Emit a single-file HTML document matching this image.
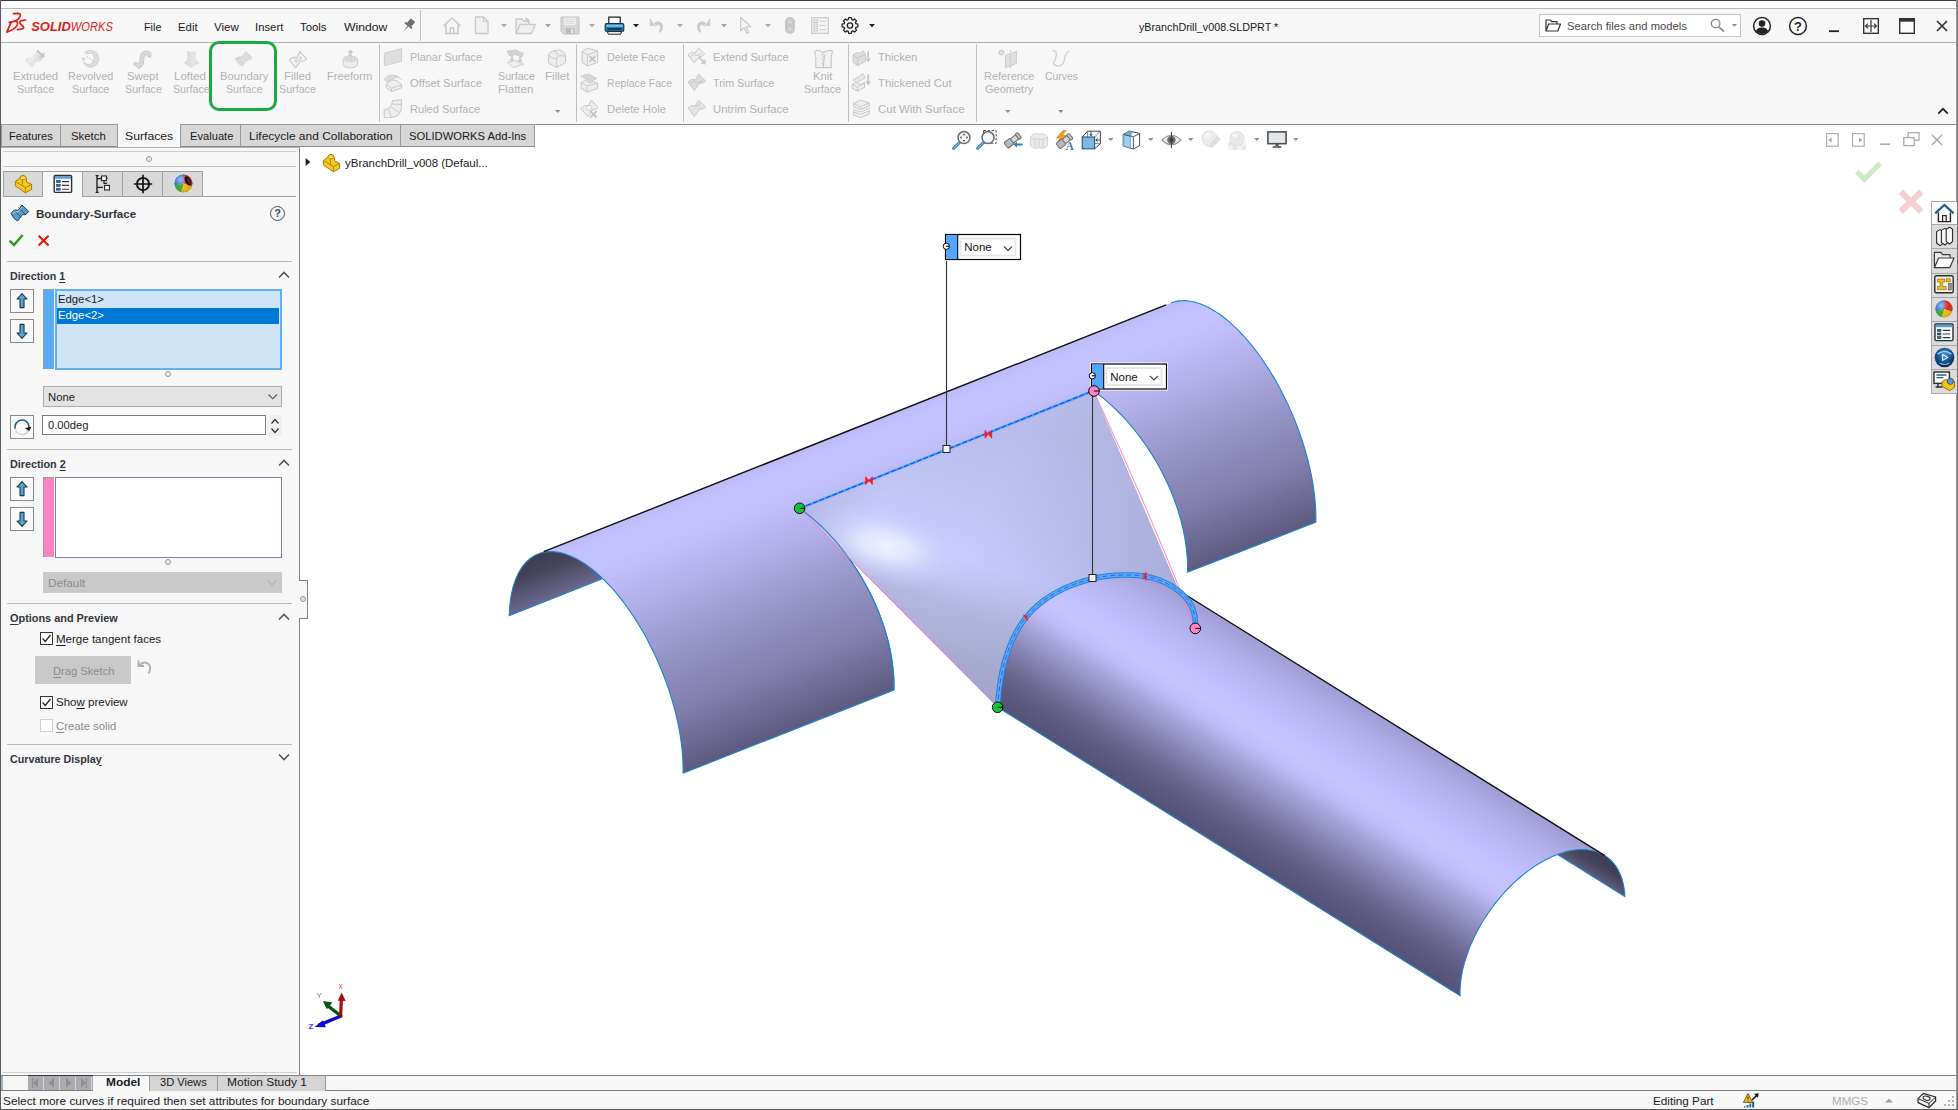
<!DOCTYPE html>
<html lang="en"><head><meta charset="utf-8"><title>yBranchDrill_v008.SLDPRT - SOLIDWORKS</title>
<style>
*{box-sizing:border-box;margin:0;padding:0}
html,body{width:1958px;height:1110px;overflow:hidden;background:#fff}
body{font-family:"Liberation Sans",sans-serif;font-size:12px;color:#1a1a1a;position:relative}
.abs{position:absolute}
.t{position:absolute;white-space:nowrap;line-height:14px;height:14px;transform-origin:0 50%}
.dis{color:#a3a3a3}
.c{text-align:center}
.line{position:absolute;background:#b4b4b4}
.vsep{position:absolute;width:1px;background:#c0c0c0;top:44px;height:78px}
.tab{position:absolute;top:124px;height:22.5px;background:#d7d7d7;border:1px solid #9a9a9a;border-bottom:1px solid #8a8a8a;font-size:12.5px;line-height:21px;text-align:center;white-space:nowrap}
.tab.act{background:#fff;border-color:#9a9a9a;height:24px}
.btab{position:absolute;top:1073px;height:18px;background:#d4d4d4;border:1px solid #9a9a9a;border-top:none;font-size:12.5px;line-height:16px;text-align:center;white-space:nowrap}
.itab{position:absolute;top:171px;height:25px;width:41px;background:#d9d9d9;border:1px solid #a0a0a0;border-bottom:none}
.itab.act{background:#f7f7f7;height:27px;border-color:#a0a0a0}
.hdr{position:absolute;left:10px;font-weight:bold;font-size:12px;letter-spacing:-0.35px;color:#2a2a2a;white-space:nowrap;line-height:14px}
.sepl{position:absolute;left:7px;width:285px;height:1px;background:#b9b9b9}
.sqbtn{position:absolute;left:10px;width:24px;height:24px;border:1px solid #8a8a8a;background:#f9f9f9}
u{text-decoration-thickness:1px;text-underline-offset:1.5px}
.rt{position:absolute;left:1931px;width:26px;height:24px;background:#dadada;border:1px solid #a8a8a8;border-right:none}
</style></head><body>
<!-- window frame -->
<div class="abs" style="left:0;top:0;width:1958px;height:1110px;background:#f7f7f7"></div>
<div class="abs" style="left:0;top:0;width:1958px;height:9px;background:#fff"></div>
<div class="abs" style="left:0;top:0;width:1958px;height:1px;background:#3a3a3a"></div>
<div class="line" style="left:0;top:8px;width:1958px;height:1px;background:#b8b8b8"></div>
<div class="line" style="left:0;top:42px;width:1958px;height:1px;background:#b0b0b0"></div>
<!-- viewport white -->
<div class="abs" style="left:300px;top:125px;width:1657px;height:950px;background:#fff"></div>
<div class="line" style="left:0;top:124px;width:1958px;height:1px;background:#8c8c8c"></div>

<!-- logo -->
<svg class="abs" style="left:4px;top:11px" width="112" height="24" viewBox="0 0 112 24">
 <g fill="none" stroke="#da1f1a" stroke-width="1.7" stroke-linecap="round" stroke-linejoin="round">
  <path d="M9.5 2.6 L14 2.3 Q17.5 2.6 16 5.6 Q14.6 8.3 11.2 10.2"/>
  <path d="M5.2 11.4 L11 10.2 Q14.6 10.3 13.2 14 Q11 18.5 2.8 21.2 L7.2 11.4"/>
  <path d="M21.6 9 L17.4 9.7 Q14.8 10.6 16.4 12.8 L19.2 15.4 Q20.6 17.6 17.6 18.2 L13.4 18.6"/>
 </g>
 <text x="27.2" y="19.7" font-family="Liberation Sans, sans-serif" font-size="13.6" font-weight="bold" font-style="italic" fill="#da1f1a" textLength="39.6" lengthAdjust="spacingAndGlyphs">SOLID</text>
 <text x="66.8" y="19.7" font-family="Liberation Sans, sans-serif" font-size="13.6" font-style="italic" fill="#da1f1a" textLength="42" lengthAdjust="spacingAndGlyphs">WORKS</text>
</svg>

<!-- menu -->
<div class="abs" style="left:420px;top:10px;width:1px;height:31px;background:#c0c0c0"></div>

<!-- search box -->
<div class="abs" style="left:1539px;top:14px;width:202px;height:23px;background:#fff;border:1px solid #c6c6c6"></div>
<div class="vsep" style="left:379px"></div>
<div class="vsep" style="left:576px"></div>
<div class="vsep" style="left:683px"></div>
<div class="vsep" style="left:848px"></div>
<div class="vsep" style="left:976px"></div>
<div class="abs" style="left:209px;top:40.5px;width:68px;height:70.5px;border:3px solid #1aaa3f;border-radius:10px"></div>
<div class="tab" style="left:1px;width:61px"></div>
<div class="tab" style="left:60px;width:58px"></div>
<div class="abs" style="left:118px;top:124px;width:63px;height:23px;background:#f7f7f7"></div>
<div class="tab" style="left:180px;width:62px"></div>
<div class="tab" style="left:240px;width:162px"></div>
<div class="tab" style="left:400px;width:135px"></div>
<!-- left panel -->
<div class="abs" style="left:1px;top:148px;width:298px;height:927px;background:#f7f7f7"></div>
<div class="abs" style="left:299px;top:148px;width:1px;height:927px;background:#808080"></div>
<div class="abs" style="left:1px;top:147px;width:299px;height:1px;background:#9fb3c4"></div>
<div class="abs" style="left:3px;top:151px;width:293px;height:1px;background:#cfcfcf"></div>
<div class="abs" style="left:146px;top:156px;width:6px;height:6px;border:1px solid #9a9a9a;border-radius:50%;background:#e8e8e8"></div>
<div class="abs" style="left:3px;top:166px;width:293px;height:1px;background:#c4c4c4"></div>
<div class="itab" style="left:3px;width:40px"></div>
<div class="itab" style="left:82px;width:41px"></div>
<div class="itab" style="left:122px;width:41px"></div>
<div class="itab" style="left:162px;width:41px"></div>
<div class="abs" style="left:42px;top:171px;width:41px;height:26px;border:1px solid #a0a0a0;border-bottom:none;background:#f7f7f7"></div>
<div class="abs" style="left:3px;top:196px;width:40px;height:1px;background:#a0a0a0"></div>
<div class="abs" style="left:82px;top:196px;width:214px;height:1px;background:#a0a0a0"></div>

<div class="abs" style="left:270px;top:206px;width:15px;height:15px;border:1.3px solid #35506a;border-radius:50%;font-size:11px;font-weight:bold;line-height:12.5px;text-align:center;color:#35506a">?</div>
<svg class="abs" style="left:8px;top:233px" width="44" height="15" viewBox="0 0 44 15"><path d="M1.6 7.6 L6 12 L14.6 2" fill="none" stroke="#2e9a14" stroke-width="2.4"/><path d="M30.6 2.8 L40.6 12.6 M40.6 2.8 L30.6 12.6" fill="none" stroke="#e01a08" stroke-width="2.1"/></svg>

<div class="sepl" style="top:261px"></div>
<svg class="abs" style="left:278px;top:271px" width="12" height="8"><path d="M1 6.5 L6 1.5 L11 6.5" fill="none" stroke="#555" stroke-width="1.6"/></svg>
<div class="sqbtn" style="top:289px"></div>
<div class="sqbtn" style="top:319px"></div>
<div class="abs" style="left:43px;top:289px;width:11px;height:80px;background:#5aaaf8;border-top:1px solid #9a9a9a;border-left:1px solid #9a9a9a"></div>
<div class="abs" style="left:55px;top:289px;width:227px;height:81px;background:#d0e4f8;border:2px solid #62aeee"></div>
<div class="abs" style="left:57px;top:308px;width:222px;height:16px;background:#0078d7"></div>
<div class="abs" style="left:165px;top:371px;width:6px;height:6px;border:1px solid #9a9a9a;border-radius:50%;background:#e8e8e8"></div>
<div class="abs" style="left:43px;top:386px;width:239px;height:21px;background:#e3e3e3;border:1px solid #adadad"></div>
<svg class="abs" style="left:267px;top:393px" width="12" height="8"><path d="M1.5 1.5 L5.8 5.8 L10 1.5" fill="none" stroke="#555" stroke-width="1.1"/></svg>
<div class="sqbtn" style="top:415px;height:24px"></div>
<div class="abs" style="left:42px;top:415px;width:224px;height:20px;background:#fff;border:1px solid #7a7a7a"></div>
<div class="abs" style="left:268px;top:415px;width:14px;height:21px;background:#efefef"></div>
<svg class="abs" style="left:270px;top:417px" width="10" height="18"><path d="M1.5 6.5 L5 2.5 L8.5 6.5 M1.5 11.5 L5 15.5 L8.5 11.5" fill="none" stroke="#333" stroke-width="1.3"/></svg>

<div class="sepl" style="top:449px"></div>
<svg class="abs" style="left:278px;top:459px" width="12" height="8"><path d="M1 6.5 L6 1.5 L11 6.5" fill="none" stroke="#555" stroke-width="1.6"/></svg>
<div class="sqbtn" style="top:477px"></div>
<div class="sqbtn" style="top:507px"></div>
<div class="abs" style="left:43px;top:477px;width:11px;height:80px;background:#ff82c4;border-top:1px solid #9a9a9a;border-left:1px solid #9a9a9a"></div>
<div class="abs" style="left:55px;top:477px;width:227px;height:81px;background:#fff;border:1px solid #7c84a0"></div>
<div class="abs" style="left:165px;top:559px;width:6px;height:6px;border:1px solid #9a9a9a;border-radius:50%;background:#e8e8e8"></div>
<div class="abs" style="left:43px;top:572px;width:239px;height:21px;background:#c9c9c9"></div>
<svg class="abs" style="left:266px;top:579px" width="12" height="8"><path d="M1.5 1.5 L6 6 L10.5 1.5" fill="none" stroke="#b4b4b4" stroke-width="1.2"/></svg>

<div class="sepl" style="top:603px"></div>
<svg class="abs" style="left:278px;top:613px" width="12" height="8"><path d="M1 6.5 L6 1.5 L11 6.5" fill="none" stroke="#555" stroke-width="1.6"/></svg>
<div class="abs" style="left:40px;top:632px;width:13px;height:13px;border:1px solid #333;background:#fff"></div>
<svg class="abs" style="left:40px;top:632px" width="13" height="13"><path d="M2.5 6.5 L5.3 9.5 L10.5 3" fill="none" stroke="#222" stroke-width="1.3"/></svg>
<div class="abs" style="left:35px;top:656px;width:96px;height:28px;background:#c9c9c9"></div>
<svg class="abs" style="left:136px;top:658px" width="18" height="18"><path d="M2.5 2.5 L2.5 8 L8 8 M3 7.5 Q8 2.5 12.5 6 Q16 10 12.5 15.5" fill="none" stroke="#b0b0b0" stroke-width="1.8"/></svg>
<div class="abs" style="left:40px;top:696px;width:13px;height:13px;border:1px solid #333;background:#fff"></div>
<svg class="abs" style="left:40px;top:696px" width="13" height="13"><path d="M2.5 6.5 L5.3 9.5 L10.5 3" fill="none" stroke="#222" stroke-width="1.3"/></svg>
<div class="abs" style="left:40px;top:719px;width:13px;height:13px;border:1px solid #cfcfcf;background:#fff"></div>

<div class="sepl" style="top:744px"></div>
<svg class="abs" style="left:278px;top:753px" width="12" height="8"><path d="M1 1.5 L6 6.5 L11 1.5" fill="none" stroke="#555" stroke-width="1.6"/></svg>

<!-- panel handle -->
<div class="abs" style="left:299px;top:580px;width:9px;height:39px;background:#f7f7f7;border:1px solid #808080;border-left:none"></div>
<div class="abs" style="left:300px;top:596px;width:6px;height:6px;border:1px solid #9a9a9a;border-radius:50%;background:#dcdcdc"></div>

<!-- bottom -->
<div class="abs" style="left:2px;top:1072px;width:295px;height:1px;background:#cfcfcf"></div>
<div class="abs" style="left:0;top:1075px;width:1958px;height:1px;background:#808080"></div>
<div class="abs" style="left:0;top:1076px;width:1958px;height:14px;background:#f6f6f6"></div>
<div class="abs" style="left:0;top:1090px;width:1958px;height:1px;background:#808080"></div>
<div class="abs" style="left:1px;top:1076px;width:2px;height:14px;background:#9db4bd"></div>
<div class="abs" style="left:28px;top:1075px;width:65px;height:15px;background:#a9abb0;border-top:1px solid #333"></div>
<svg class="abs" style="left:28px;top:1076px" width="65" height="14" viewBox="0 0 65 14">
 <g fill="#8e8f93"><path d="M4 2h1.2v10H4z M10 2 L10 12 L5.2 7z"/><path d="M26 2 L26 12 L20.5 7z"/><path d="M38 2 L43.5 7 L38 12z"/><path d="M53 2 L57.8 7 L53 12z M57.8 2h1.2v10h-1.2z"/></g>
 <g fill="#d8d8dc"><rect x="15" y="1" width="1" height="13"/><rect x="31" y="1" width="1" height="13"/><rect x="47" y="1" width="1" height="13"/><rect x="63" y="1" width="1" height="13"/></g>
</svg>
<div class="btab" style="left:93px;width:57px;background:#f7f7f7;font-weight:bold;border-left:none;letter-spacing:-0.3px;top:1076px;height:15px;line-height:12px;border-bottom:none"></div>
<div class="btab" style="left:149px;width:69px;top:1076px;height:15px;line-height:12px;border-bottom:none"></div>
<div class="btab" style="left:217px;width:109px;top:1076px;height:15px;line-height:12px;border-bottom:none"></div>
<svg class="abs" style="left:1885px;top:1098px" width="8" height="5"><path d="M0 4.5 L4 0.5 L8 4.5z" fill="#a0a0a0"/></svg>
<!-- frame borders -->
<div class="abs" style="left:0;top:0;width:1px;height:1110px;background:#5c5c5c"></div>
<div class="abs" style="left:1956px;top:0;width:2px;height:1110px;background:#747474"></div><div class="abs" style="left:1956px;top:0;width:1px;height:1110px;background:#9a9a9a"></div>
<div class="abs" style="left:0;top:1109px;width:1958px;height:1px;background:#5c5c5c"></div>
<div class="t" id="t0" style="left:144.3px;top:20.0px;font-size:11.6px;transform:scaleX(0.9311);">File</div>
<div class="t" id="t1" style="left:178.2px;top:20.0px;font-size:11.6px;transform:scaleX(0.9808);">Edit</div>
<div class="t" id="t2" style="left:214.3px;top:20.0px;font-size:11.6px;transform:scaleX(0.9951);">View</div>
<div class="t" id="t3" style="left:255.4px;top:20.0px;font-size:11.6px;transform:scaleX(0.9759);">Insert</div>
<div class="t" id="t4" style="left:300.1px;top:20.0px;font-size:11.6px;transform:scaleX(0.9786);">Tools</div>
<div class="t" id="t5" style="left:343.5px;top:20.0px;font-size:11.6px;transform:scaleX(1.0521);">Window</div>
<div class="t" id="t6" style="left:1139.3px;top:19.5px;font-size:11.6px;transform:scaleX(0.9258);">yBranchDrill_v008.SLDPRT *</div>
<div class="t" id="t7" style="left:1566.7px;top:19.3px;font-size:11.4px;transform:scaleX(0.9862);color:#4a4a4a;">Search files and models</div>
<div class="t" id="t8" style="left:12.6px;top:69.2px;font-size:10.6px;transform:scaleX(1.0612);color:#b2b2b2;">Extruded</div>
<div class="t" id="t9" style="left:16.5px;top:82.2px;font-size:10.6px;transform:scaleX(1.0215);color:#b2b2b2;">Surface</div>
<div class="t" id="t10" style="left:68.3px;top:69.2px;font-size:10.6px;transform:scaleX(1.0233);color:#b2b2b2;">Revolved</div>
<div class="t" id="t11" style="left:72.2px;top:82.2px;font-size:10.6px;transform:scaleX(1.0242);color:#b2b2b2;">Surface</div>
<div class="t" id="t12" style="left:127.1px;top:69.2px;font-size:10.6px;transform:scaleX(1.0729);color:#b2b2b2;">Swept</div>
<div class="t" id="t13" style="left:124.6px;top:82.2px;font-size:10.6px;transform:scaleX(1.0105);color:#b2b2b2;">Surface</div>
<div class="t" id="t14" style="left:174.3px;top:69.2px;font-size:10.6px;transform:scaleX(1.0859);color:#b2b2b2;">Lofted</div>
<div class="t" id="t15" style="left:172.5px;top:82.2px;font-size:10.6px;transform:scaleX(1.0050);color:#b2b2b2;">Surface</div>
<div class="t" id="t16" style="left:220.3px;top:69.2px;font-size:10.6px;transform:scaleX(1.0692);color:#b2b2b2;">Boundary</div>
<div class="t" id="t17" style="left:225.7px;top:82.2px;font-size:10.6px;transform:scaleX(1.0050);color:#b2b2b2;">Surface</div>
<div class="t" id="t18" style="left:284.3px;top:69.2px;font-size:10.6px;transform:scaleX(1.0739);color:#b2b2b2;">Filled</div>
<div class="t" id="t19" style="left:279.4px;top:82.2px;font-size:10.6px;transform:scaleX(1.0105);color:#b2b2b2;">Surface</div>
<div class="t" id="t20" style="left:327.4px;top:69.2px;font-size:10.6px;transform:scaleX(1.0515);color:#b2b2b2;">Freeform</div>
<div class="t" id="t21" style="left:497.8px;top:69.2px;font-size:10.6px;transform:scaleX(1.0105);color:#b2b2b2;">Surface</div>
<div class="t" id="t22" style="left:498.4px;top:82.2px;font-size:10.6px;transform:scaleX(1.0960);color:#b2b2b2;">Flatten</div>
<div class="t" id="t23" style="left:545.3px;top:69.2px;font-size:10.6px;transform:scaleX(1.0950);color:#b2b2b2;">Fillet</div>
<div class="t" id="t24" style="left:813.4px;top:69.2px;font-size:10.6px;transform:scaleX(1.0566);color:#b2b2b2;">Knit</div>
<div class="t" id="t25" style="left:804.4px;top:82.2px;font-size:10.6px;transform:scaleX(1.0160);color:#b2b2b2;">Surface</div>
<div class="t" id="t26" style="left:983.5px;top:69.2px;font-size:10.6px;transform:scaleX(1.0309);color:#b2b2b2;">Reference</div>
<div class="t" id="t27" style="left:984.6px;top:82.2px;font-size:10.6px;transform:scaleX(1.0384);color:#b2b2b2;">Geometry</div>
<div class="t" id="t28" style="left:1044.6px;top:69.2px;font-size:10.6px;transform:scaleX(0.9803);color:#b2b2b2;">Curves</div>
<div class="t" id="t29" style="left:409.5px;top:50.1px;font-size:10.6px;transform:scaleX(1.0289);color:#b2b2b2;">Planar Surface</div>
<div class="t" id="t30" style="left:409.5px;top:76.2px;font-size:10.6px;transform:scaleX(1.0677);color:#b2b2b2;">Offset Surface</div>
<div class="t" id="t31" style="left:409.5px;top:102.2px;font-size:10.6px;transform:scaleX(1.0456);color:#b2b2b2;">Ruled Surface</div>
<div class="t" id="t32" style="left:606.5px;top:50.1px;font-size:10.6px;transform:scaleX(1.0188);color:#b2b2b2;">Delete Face</div>
<div class="t" id="t33" style="left:606.5px;top:76.2px;font-size:10.6px;transform:scaleX(0.9973);color:#b2b2b2;">Replace Face</div>
<div class="t" id="t34" style="left:606.5px;top:102.2px;font-size:10.6px;transform:scaleX(1.0658);color:#b2b2b2;">Delete Hole</div>
<div class="t" id="t35" style="left:713.2px;top:50.1px;font-size:10.6px;transform:scaleX(1.0437);color:#b2b2b2;">Extend Surface</div>
<div class="t" id="t36" style="left:713.2px;top:76.2px;font-size:10.6px;transform:scaleX(1.0158);color:#b2b2b2;">Trim Surface</div>
<div class="t" id="t37" style="left:713.2px;top:102.2px;font-size:10.6px;transform:scaleX(1.0700);color:#b2b2b2;">Untrim Surface</div>
<div class="t" id="t38" style="left:878.4px;top:50.1px;font-size:10.6px;transform:scaleX(1.0595);color:#b2b2b2;">Thicken</div>
<div class="t" id="t39" style="left:878.4px;top:76.2px;font-size:10.6px;transform:scaleX(1.0774);color:#b2b2b2;">Thickened Cut</div>
<div class="t" id="t40" style="left:878.4px;top:102.2px;font-size:10.6px;transform:scaleX(1.0802);color:#b2b2b2;">Cut With Surface</div>
<div class="t" id="t41" style="left:9.2px;top:128.9px;font-size:11.3px;transform:scaleX(0.9800);">Features</div>
<div class="t" id="t42" style="left:70.9px;top:128.9px;font-size:11.3px;transform:scaleX(1.0073);">Sketch</div>
<div class="t" id="t43" style="left:124.9px;top:128.9px;font-size:11.3px;transform:scaleX(1.0809);">Surfaces</div>
<div class="t" id="t44" style="left:189.5px;top:128.9px;font-size:11.3px;transform:scaleX(0.9871);">Evaluate</div>
<div class="t" id="t45" style="left:249.0px;top:128.9px;font-size:11.3px;transform:scaleX(1.0586);">Lifecycle and Collaboration</div>
<div class="t" id="t46" style="left:409.0px;top:128.9px;font-size:11.3px;transform:scaleX(0.9921);">SOLIDWORKS Add-Ins</div>
<div class="t" id="t47" style="left:344.6px;top:156.1px;font-size:11px;transform:scaleX(1.0427);">yBranchDrill_v008 (Defaul...</div>
<div class="t" id="t48" style="left:35.5px;top:207.1px;font-size:11.8px;transform:scaleX(0.9788);font-weight:bold;color:#30353d;">Boundary-Surface</div>
<div class="t" id="t49" style="left:10.1px;top:269.2px;font-size:10.8px;transform:scaleX(0.9872);font-weight:bold;color:#30353d;">Direction <u>1</u></div>
<div class="t" id="t50" style="left:58.2px;top:292.4px;font-size:10.8px;transform:scaleX(1.0469);">Edge&lt;1&gt;</div>
<div class="t" id="t51" style="left:58.2px;top:308.3px;font-size:10.8px;transform:scaleX(1.0469);color:#fff;">Edge&lt;2&gt;</div>
<div class="t" id="t52" style="left:47.5px;top:390.4px;font-size:10.8px;transform:scaleX(1.0421);">None</div>
<div class="t" id="t53" style="left:48.4px;top:418.0px;font-size:10.8px;transform:scaleX(1.0351);">0.00deg</div>
<div class="t" id="t54" style="left:10.1px;top:457.0px;font-size:10.8px;transform:scaleX(0.9980);font-weight:bold;color:#30353d;">Direction <u>2</u></div>
<div class="t" id="t55" style="left:47.5px;top:576.3px;font-size:10.8px;transform:scaleX(1.0900);color:#8c8c8c;">Default</div>
<div class="t" id="t56" style="left:10.1px;top:610.7px;font-size:10.8px;transform:scaleX(1.0092);font-weight:bold;color:#30353d;"><u>O</u>ptions and Preview</div>
<div class="t" id="t57" style="left:56.3px;top:632.3px;font-size:10.8px;transform:scaleX(1.0675);"><u>M</u>erge tangent faces</div>
<div class="t" id="t58" style="left:53.3px;top:664.4px;font-size:10.8px;transform:scaleX(1.0347);color:#8c8c8c;"><u>D</u>rag Sketch</div>
<div class="t" id="t59" style="left:56.3px;top:695.1px;font-size:10.8px;transform:scaleX(1.0662);">Sho<u>w</u> preview</div>
<div class="t" id="t60" style="left:56.3px;top:719.3px;font-size:10.8px;transform:scaleX(1.0479);color:#8c8c8c;"><u>C</u>reate solid</div>
<div class="t" id="t61" style="left:10.1px;top:751.5px;font-size:10.8px;transform:scaleX(0.9911);font-weight:bold;color:#30353d;">Curvature Displa<u>y</u></div>
<div class="t" id="t62" style="left:105.5px;top:1074.7px;font-size:11.6px;transform:scaleX(1.0269);font-weight:bold;">Model</div>
<div class="t" id="t63" style="left:160.1px;top:1074.7px;font-size:11.6px;transform:scaleX(0.9576);">3D Views</div>
<div class="t" id="t64" style="left:227.3px;top:1074.7px;font-size:11.6px;transform:scaleX(1.0331);">Motion Study 1</div>
<div class="t" id="t65" style="left:2.6px;top:1093.8px;font-size:11.6px;transform:scaleX(1.0207);">Select more curves if required then set attributes for boundary surface</div>
<div class="t" id="t66" style="left:1653.4px;top:1093.9px;font-size:11.6px;transform:scaleX(1.0111);">Editing Part</div>
<div class="t" id="t67" style="left:1832.0px;top:1093.9px;font-size:11.6px;transform:scaleX(0.9978);color:#ababab;">MMGS</div>
<svg class="abs" style="left:401px;top:18px" width="15" height="15" viewBox="0 0 15 15"><g transform="rotate(40 7.5 7.5)" fill="#6e6e6e"><rect x="4.6" y="0.5" width="5.8" height="6.2" rx="0.6"/><rect x="3" y="6.5" width="9" height="1.9"/><path d="M6.9 8.4 h1.2 l-0.6 7z"/></g></svg>
<svg class="abs" style="left:442px;top:16px" width="20" height="19" viewBox="0 0 20 19"><path d="M1.5 10 L10 2 L18.5 10 M4 8.5 V17.5 H16 V8.5 M8.3 17.5 V12 H11.7 V17.5" fill="none" stroke="#c9c9c9" stroke-width="1.5" stroke-linejoin="round"/></svg>
<svg class="abs" style="left:474px;top:16px" width="16" height="19" viewBox="0 0 16 19"><path d="M1.5 1 H9.5 L14 5.5 V17.5 H1.5z" fill="#f2f2f2" stroke="#c9c9c9" stroke-width="1.3" stroke-linejoin="round"/><path d="M9.5 1 V5.5 H14" fill="none" stroke="#c9c9c9" stroke-width="1.1"/></svg>
<svg class="abs" style="left:500.5px;top:23.8px" width="6" height="4" viewBox="0 0 6 4"><path d="M0 0 H6 L3.0 3.3z" fill="#a3a3a3"/></svg>
<svg class="abs" style="left:515px;top:16px" width="22" height="19" viewBox="0 0 22 19"><path d="M1 17.5 V3 H7 L8.6 5 H14 V8.5 M1 17.5 L5 8.5 H20.5 L16.5 17.5z" fill="#efefef" stroke="#c9c9c9" stroke-width="1.3" stroke-linejoin="round"/><path d="M10.5 1 l4.2 2.4 l-1.6 0.6 l1.8 2.8 l-1.6 0.8 l-1.7 -2.8 l-1.3 1z" fill="#c9c9c9"/></svg>
<svg class="abs" style="left:545px;top:23.8px" width="6" height="4" viewBox="0 0 6 4"><path d="M0 0 H6 L3.0 3.3z" fill="#a3a3a3"/></svg>
<svg class="abs" style="left:560px;top:16px" width="20" height="19" viewBox="0 0 20 19"><path d="M1 1 H19 V18 H3.5 L1 15.5z" fill="#d7d7d7" stroke="#c4c4c4" stroke-width="1"/><rect x="4.3" y="1.8" width="11.4" height="7.4" fill="#f1f1f1"/><path d="M5.5 3.6 h9 M5.5 5.4 h9 M5.5 7.2 h9" stroke="#d2d2d2" stroke-width="0.8"/><rect x="6" y="12" width="8.5" height="6" fill="#bdbdbd"/><rect x="11" y="13" width="2" height="4" fill="#e8e8e8"/></svg>
<svg class="abs" style="left:588.8px;top:23.8px" width="6" height="4" viewBox="0 0 6 4"><path d="M0 0 H6 L3.0 3.3z" fill="#a3a3a3"/></svg>
<svg class="abs" style="left:604px;top:16px" width="21" height="19" viewBox="0 0 21 19"><path d="M4.8 8 V1.2 H16.2 V8" fill="#fff" stroke="#222" stroke-width="1.2"/><rect x="1.2" y="7.6" width="18.6" height="7.6" rx="1.3" fill="#1f7fbd" stroke="#10324a" stroke-width="1.1"/><rect x="2.2" y="8.6" width="16.6" height="2.2" fill="#7cc0e8"/><rect x="3.4" y="12.2" width="14.2" height="1.6" fill="#0d2f49"/><path d="M3.4 15.6 H17.6 L16.6 18.2 H4.4z" fill="#fff" stroke="#222" stroke-width="1"/></svg>
<svg class="abs" style="left:632.5px;top:23.8px" width="6" height="4" viewBox="0 0 6 4"><path d="M0 0 H6 L3.0 3.3z" fill="#1a1a1a"/></svg>
<svg class="abs" style="left:649px;top:17px" width="17" height="17" viewBox="0 0 17 17"><path d="M1.2 1.8 V8.6 H8 L5.6 6.2 Q9.5 3.2 12.6 6.4 Q15.4 10.4 11.4 15.4 L10.2 14.4 Q12.6 10.6 10.8 8.2 Q8.8 6.2 6.2 8.4" fill="#c9c9c9" stroke="#c9c9c9" stroke-width="0.8" stroke-linejoin="round"/></svg>
<svg class="abs" style="left:676.7px;top:23.8px" width="6" height="4" viewBox="0 0 6 4"><path d="M0 0 H6 L3.0 3.3z" fill="#a3a3a3"/></svg>
<svg class="abs" style="left:694px;top:17px" width="17" height="17" viewBox="0 0 17 17"><g transform="translate(17 0) scale(-1 1)"><path d="M1.2 1.8 V8.6 H8 L5.6 6.2 Q9.5 3.2 12.6 6.4 Q15.4 10.4 11.4 15.4 L10.2 14.4 Q12.6 10.6 10.8 8.2 Q8.8 6.2 6.2 8.4" fill="#c9c9c9" stroke="#c9c9c9" stroke-width="0.8" stroke-linejoin="round"/></g></svg>
<svg class="abs" style="left:720.8px;top:23.8px" width="6" height="4" viewBox="0 0 6 4"><path d="M0 0 H6 L3.0 3.3z" fill="#a3a3a3"/></svg>
<svg class="abs" style="left:739px;top:16px" width="14" height="19" viewBox="0 0 14 19"><path d="M1.6 1.2 V15 L5.2 11.6 L7.8 17.4 L9.8 16.5 L7.3 10.9 L12 10.7z" fill="#f4f4f4" stroke="#c9c9c9" stroke-width="1.2" stroke-linejoin="round"/></svg>
<svg class="abs" style="left:764.8px;top:23.8px" width="6" height="4" viewBox="0 0 6 4"><path d="M0 0 H6 L3.0 3.3z" fill="#a3a3a3"/></svg>
<svg class="abs" style="left:784px;top:16px" width="12" height="19" viewBox="0 0 12 19"><rect x="1" y="1" width="10" height="17" rx="5" fill="#c8c8c8"/><circle cx="6" cy="6" r="1.7" fill="#dcdcdc"/><circle cx="6" cy="13" r="1.7" fill="#dcdcdc"/></svg>
<svg class="abs" style="left:811px;top:17px" width="18" height="17" viewBox="0 0 18 17"><rect x="0.7" y="0.7" width="16.6" height="15.6" fill="#f4f4f4" stroke="#c9c9c9" stroke-width="1.2"/><g fill="none" stroke="#c9c9c9" stroke-width="1.1"><rect x="3" y="3" width="3.4" height="2.6"/><rect x="3" y="7.2" width="3.4" height="2.6"/><rect x="3" y="11.4" width="3.4" height="2.6"/><path d="M8.5 4.3 h6 M8.5 8.5 h6 M8.5 12.7 h6"/></g></svg>
<svg class="abs" style="left:841px;top:16px" width="18" height="19" viewBox="0 0 18 19"><path d="M14.83 7.70 L16.88 8.15 L16.88 10.85 L14.83 11.30 L14.40 12.35 L15.53 14.12 L13.62 16.03 L11.85 14.90 L10.80 15.33 L10.35 17.38 L7.65 17.38 L7.20 15.33 L6.15 14.90 L4.38 16.03 L2.47 14.12 L3.60 12.35 L3.17 11.30 L1.12 10.85 L1.12 8.15 L3.17 7.70 L3.60 6.65 L2.47 4.88 L4.38 2.97 L6.15 4.10 L7.20 3.67 L7.65 1.62 L10.35 1.62 L10.80 3.67 L11.85 4.10 L13.62 2.97 L15.53 4.88 L14.40 6.65 Z" fill="none" stroke="#222" stroke-width="1.25" stroke-linejoin="round"/><circle cx="9" cy="9.5" r="2.7" fill="none" stroke="#222" stroke-width="1.25"/></svg>
<svg class="abs" style="left:868.9px;top:23.8px" width="6" height="4" viewBox="0 0 6 4"><path d="M0 0 H6 L3.0 3.3z" fill="#1a1a1a"/></svg>
<svg class="abs" style="left:1545px;top:18px" width="17" height="15" viewBox="0 0 17 15"><path d="M1 13 V2 H5.6 L6.8 3.6 H12 V6 M1 13 L3.6 6 H15.5 L12.8 13z" fill="none" stroke="#333" stroke-width="1.2" stroke-linejoin="round"/></svg>
<svg class="abs" style="left:1710px;top:18px" width="16" height="15" viewBox="0 0 16 15"><circle cx="5.6" cy="5.6" r="4.3" fill="none" stroke="#8a8a8a" stroke-width="1.3"/><path d="M8.8 8.8 L14 13.6" stroke="#8a8a8a" stroke-width="1.8"/></svg>
<svg class="abs" style="left:1731.5px;top:24px" width="5" height="4" viewBox="0 0 5 4"><path d="M0 0 H5 L2.5 2.8z" fill="#8a8a8a"/></svg>
<svg class="abs" style="left:1752px;top:16px" width="20" height="20" viewBox="0 0 20 20"><circle cx="10" cy="10" r="8.4" fill="#fff" stroke="#222" stroke-width="1.5"/><circle cx="10" cy="7.6" r="3.3" fill="#222"/><path d="M3.8 15.2 Q5 11.2 10 11.4 Q15 11.2 16.2 15.2 Q13.6 18 10 18 Q6.4 18 3.8 15.2z" fill="#222"/></svg>
<svg class="abs" style="left:1788px;top:16px" width="20" height="20" viewBox="0 0 20 20"><circle cx="10" cy="10" r="8.4" fill="#fff" stroke="#222" stroke-width="1.5"/><text x="10" y="14.6" text-anchor="middle" font-family="Liberation Sans, sans-serif" font-weight="bold" font-size="13" fill="#222">?</text></svg>
<svg class="abs" style="left:1829px;top:30px" width="11" height="3" viewBox="0 0 11 3"><rect x="0" y="0.3" width="10" height="1.8" fill="#222"/></svg>
<svg class="abs" style="left:1863px;top:18px" width="16" height="16" viewBox="0 0 16 16"><rect x="0.7" y="0.7" width="14.6" height="14.6" fill="#fff" stroke="#333" stroke-width="1.4"/><path d="M2.6 8 H13.4 M8 2 V14 M5 5.6 L2.6 8 L5 10.4 M11 5.6 L13.4 8 L11 10.4" fill="none" stroke="#333" stroke-width="1.2"/></svg>
<svg class="abs" style="left:1899px;top:18px" width="16" height="16" viewBox="0 0 16 16"><rect x="0.7" y="0.7" width="14.6" height="14.6" fill="#fbfbfb" stroke="#333" stroke-width="1.4"/><rect x="0.7" y="0.7" width="14.6" height="3" fill="#333"/></svg>
<svg class="abs" style="left:1936px;top:20px" width="12" height="12" viewBox="0 0 12 12"><path d="M1 1 L11 11 M11 1 L1 11" stroke="#333" stroke-width="1.7"/></svg>
<svg class="abs" style="left:1937px;top:107px" width="12" height="8" viewBox="0 0 12 8"><path d="M1.2 6.6 L6 1.8 L10.8 6.6" fill="none" stroke="#222" stroke-width="1.7"/></svg>
<svg class="abs" style="left:24px;top:49px" width="22" height="20" viewBox="0 0 22 20"><defs><linearGradient id="gx" x1="0" y1="0" x2="1" y2="0.6"><stop offset="0" stop-color="#d4d4d4"/><stop offset="0.45" stop-color="#ececec"/><stop offset="1" stop-color="#d6d6d6"/></linearGradient></defs><path d="M0.9 11 Q3.4 7.4 7 8.4 Q10.4 6.4 13 1.4 L19 9.8 Q16 13.6 13 12.6 Q10.4 14.6 7.8 18.9 Q3.6 15.4 0.9 11z" fill="url(#gx)"/><path d="M12.4 2.2 L17 6.6 L14.6 8.6 L20.4 8.8 L20.2 3 L18.2 5 L13.8 0.8z" fill="#c3c3c3"/></svg>
<svg class="abs" style="left:81px;top:49px" width="20" height="20" viewBox="0 0 20 20"><path d="M3.6 3.2 Q9.6 -0.6 15 3.2 Q19.4 8 17 13.4 Q13.6 19.4 7.4 17.8 Q3.6 16.4 2.4 12.6 Q6.4 17 10.6 14.8 Q14.6 11.6 13 6.8 Q11 3 6.2 4.8z" fill="#dedede" stroke="#cacaca" stroke-width="0.8" stroke-linejoin="round"/><path d="M1.2 8.4 L2 12 L4.4 9.6z" fill="#cacaca"/><path d="M5.4 7.4 L13.6 12.8" fill="none" stroke="#c6c6c6" stroke-width="0.9" stroke-dasharray="2 1"/></svg>
<svg class="abs" style="left:132px;top:49px" width="21" height="21" viewBox="0 0 21 21"><path d="M10.5 3 Q14 0.4 18.6 3.4 Q20 5.4 18.4 8.2 L15.2 7.2 Q14.4 4.8 12.8 6 Q11.4 9.4 11.6 13 Q11.4 17.4 6.8 19.6 L1.4 15 L3.6 13 L6.4 15.2 Q8 13.6 8 10.6 Q8.2 5.6 10.5 3z" fill="#d9d9d9" stroke="#c6c6c6" stroke-width="0.9" stroke-linejoin="round"/></svg>
<svg class="abs" style="left:183px;top:50px" width="17" height="19" viewBox="0 0 17 19"><defs><linearGradient id="gl2" x1="0" y1="0" x2="1" y2="0"><stop offset="0" stop-color="#d2d2d2"/><stop offset="0.6" stop-color="#e6e6e6"/><stop offset="1" stop-color="#d8d8d8"/></linearGradient></defs><path d="M4.2 1 Q8.5 2.6 12.6 1 L12.6 8.6 Q13 11 16.4 12.6 L8.4 18 L0.6 12.6 Q4 11 4.2 8.6z" fill="url(#gl2)"/></svg>
<svg class="abs" style="left:234px;top:50px" width="20" height="18" viewBox="0 0 20 18"><path d="M1 8.8 Q3.4 6 6.4 6.6 Q9.6 4.6 12 0.9 L18.9 7.8 Q16.6 11.4 13.6 11 Q10.6 13 8.2 16.8 Q3.6 14.6 1 8.8z" fill="#dadada"/><path d="M5 6.4 L12.4 13.4 M8.6 4 L15.8 11" stroke="#ececec" stroke-width="0.9" fill="none"/><path d="M1.6 9.6 Q4 7 6.6 7.6" stroke="#c8c8c8" stroke-width="0.8" fill="none"/></svg>
<svg class="abs" style="left:288px;top:50px" width="20" height="19" viewBox="0 0 20 19"><path d="M1.4 10 Q5 6.2 8.6 8 L12 1.6 L18.6 8.8 Q15 12 12.6 11 L7.6 17.6z" fill="#f4f4f4" stroke="#c6c6c6" stroke-width="1.1" stroke-linejoin="round"/><path d="M5.4 10.4 Q8 8.6 10 9.4 L12.4 5.8 L15 8.6 Q12.6 10.8 11 10.6 L8.4 13.6z" fill="#d9d9d9"/></svg>
<svg class="abs" style="left:342px;top:49px" width="17" height="20" viewBox="0 0 17 20"><path d="M1.2 10.4 Q1.4 7.6 5.4 7.2 Q7.6 4.8 8.4 7 Q15 7.4 15.6 10.4 V15.6 Q14.4 18.8 8.4 18.8 Q2 18.6 1.2 15.6z" fill="#ececec" stroke="#c6c6c6" stroke-width="0.9"/><path d="M1.4 10.6 Q3 13.2 8.4 13.2 Q14 13.2 15.4 10.6 Q14 8 8.4 7.6 Q3 7.8 1.4 10.6z" fill="#d9d9d9"/><path d="M7.6 8.6 V4 H5.6 L8.5 0.6 L11.4 4 H9.4 V8.6z" fill="#c8c8c8"/></svg>
<svg class="abs" style="left:383px;top:47px" width="20" height="20" viewBox="0 0 20 20"><path d="M1.4 6.2 L18.6 1.6 V14.2 L1.4 18.6z" fill="#dedede" stroke="#cdcdcd" stroke-width="1"/></svg>
<svg class="abs" style="left:383px;top:73px" width="20" height="20" viewBox="0 0 20 20"><path d="M1 6.4 Q7 -0.6 15 3.4 L9.6 6 Q6.4 6.6 5.4 10.2z" fill="#dcdcdc" stroke="#c6c6c6" stroke-width="0.8"/><path d="M12.6 3 Q17 4.4 18.6 7" fill="none" stroke="#c6c6c6" stroke-width="0.9"/><path d="M3.2 11.2 Q8.6 5 14 8 L18.6 11.6 V14.8 L8.6 18.6 L3.2 14.4z" fill="#eeeeee" stroke="#c6c6c6" stroke-width="1" stroke-linejoin="round"/><path d="M3.2 11.2 L8.6 15.2 L18.6 11.6 M8.6 15.2 V18.6" fill="none" stroke="#c6c6c6" stroke-width="0.9"/></svg>
<svg class="abs" style="left:383px;top:99px" width="20" height="20" viewBox="0 0 20 20"><path d="M9.6 1.6 L18.4 0.8 V9 Q17.4 17.6 9 18.4 L1.2 18.8 V10.6 Q8.6 10.4 9.6 1.6z" fill="#eeeeee" stroke="#c6c6c6" stroke-width="1" stroke-linejoin="round"/><path d="M9.4 5 L18.2 5.6 M8.4 8.6 L16.6 13.4 M5.4 10.4 L8.6 18.2" fill="none" stroke="#c6c6c6" stroke-width="0.9"/></svg>
<svg class="abs" style="left:506px;top:49px" width="19" height="20" viewBox="0 0 19 20"><path d="M1 2.2 L10 1 L17.4 4.6 L16 8 L9 5.6 L3.4 6.6z" fill="#d2d2d2" stroke="#c6c6c6" stroke-width="0.8"/><path d="M5 6.4 V10 H3 L6 13.6 L9 10 H7 V6z M13 7.4 V11 H11 L14 14.6 L17 11 H15 V8z" fill="#cfcfcf"/><path d="M1.4 13.4 L9.4 11.6 L17.6 15.2 L7.6 18.6z" fill="#f1f1f1" stroke="#c6c6c6" stroke-width="0.9"/></svg>
<svg class="abs" style="left:547px;top:49px" width="20" height="20" viewBox="0 0 20 20"><path d="M1.4 6.4 Q2 3 6.4 2 L12 1 Q18 2.2 18.6 8 V13.6 L9.6 18.6 L1.4 14z" fill="#eeeeee" stroke="#c6c6c6" stroke-width="1" stroke-linejoin="round"/><path d="M1.4 6.4 Q5 9.6 9.6 10 Q10 5 18.4 7.4 M9.6 10 V18.6 M6.4 2 Q11 3.4 10.6 6.2" fill="none" stroke="#c6c6c6" stroke-width="0.9"/></svg>
<svg class="abs" style="left:555.2px;top:110.3px" width="5.4" height="4" viewBox="0 0 5.4 4"><path d="M0 0 H5.4 L2.7 3.0z" fill="#8e8e8e"/></svg>
<svg class="abs" style="left:581px;top:47px" width="18" height="20" viewBox="0 0 18 20"><path d="M1.2 4.6 L6.4 1.2 L16.6 4 V15.4 L6.6 19 L1.2 15.4z" fill="#eeeeee" stroke="#c6c6c6" stroke-width="1" stroke-linejoin="round"/><path d="M1.2 4.6 L6.4 7.8 L16.6 4 M6.4 7.8 V19" fill="none" stroke="#c6c6c6" stroke-width="0.9"/><path d="M8.6 9.2 L14.2 14.6 M14.2 9.2 L8.6 14.6" stroke="#c2c2c2" stroke-width="1.7"/></svg>
<svg class="abs" style="left:580px;top:73px" width="19" height="20" viewBox="0 0 19 20"><path d="M0.8 3 L9 1 L17 5.6 L9.6 8.6z" fill="#d6d6d6" stroke="#c6c6c6" stroke-width="0.8"/><path d="M1.2 9.4 L5.4 7.6 L9.4 10 L13.6 8.6 L17.6 10.4 V15.4 L7 19 L1.2 15.4z" fill="#eeeeee" stroke="#c6c6c6" stroke-width="1" stroke-linejoin="round"/><path d="M1.2 9.4 L7 13 L17.6 10.4 M7 13 V19" fill="none" stroke="#c6c6c6" stroke-width="0.9"/></svg>
<svg class="abs" style="left:580px;top:99px" width="20" height="20" viewBox="0 0 20 20"><path d="M1 9.6 Q4.6 5.2 8.4 7 L11.4 1.2 L18 8.4 Q15 11.4 12.6 10.6 L8 17.6z" fill="#eeeeee" stroke="#c6c6c6" stroke-width="1" stroke-linejoin="round"/><circle cx="9.2" cy="8.8" r="2.6" fill="#f7f7f7" stroke="#c6c6c6" stroke-width="0.9"/><path d="M10.4 12.2 L16.6 18.4 M16.6 12.2 L10.4 18.4" stroke="#c2c2c2" stroke-width="1.9"/></svg>
<svg class="abs" style="left:687px;top:47px" width="20" height="19" viewBox="0 0 20 19"><path d="M1 8 Q4.4 4 8 6.2 L11.6 0.8 L17.6 7 Q15 10.4 12.4 9.4 L7.4 15.8z" fill="#eeeeee" stroke="#c6c6c6" stroke-width="1" stroke-linejoin="round"/><path d="M3.4 9.4 Q6.4 6.6 9 8.2 Q11.6 9 14.4 6.4" fill="none" stroke="#c6c6c6" stroke-width="0.9"/><path d="M11 10.6 L15.4 15 L13.4 16.8 L18.8 17.4 L18.4 11.8 L16.6 13.6 L12.4 9.4z" fill="#c9c9c9"/></svg>
<svg class="abs" style="left:687px;top:73px" width="20" height="19" viewBox="0 0 20 19"><path d="M1 9 Q4.4 5 8 7.2 L11.6 1.2 L18.6 8 Q15 11.4 12.4 10.4 L7.4 17.6z" fill="#dcdcdc" stroke="#c6c6c6" stroke-width="0.9" stroke-linejoin="round"/><path d="M2.6 10.8 Q6.4 7 9.4 9 Q12.6 10.4 16.4 6.6" fill="none" stroke="#c4c4c4" stroke-width="1"/></svg>
<svg class="abs" style="left:687px;top:99px" width="20" height="19" viewBox="0 0 20 19"><path d="M1 9 Q4.4 5 8 7.2 L11.6 1.2 L18.6 8 Q15 11.4 12.4 10.4 L7.4 17.6z" fill="#e3e3e3" stroke="#c6c6c6" stroke-width="0.9" stroke-linejoin="round"/><path d="M9.6 5 L14.6 10 M8.4 7.6 L13.6 4.6" fill="none" stroke="#cdcdcd" stroke-width="0.9"/></svg>
<svg class="abs" style="left:813px;top:49px" width="21" height="20" viewBox="0 0 21 20"><path d="M1.4 2.6 Q4.6 0.6 7.4 2 L10.4 3.6 L13.4 2 Q16.6 0.6 19.6 2.6 Q18.4 5.6 18.2 8.6 V18.6 H2.8 V8.6 Q2.6 5.6 1.4 2.6z" fill="#f2f2f2" stroke="#c6c6c6" stroke-width="1.1" stroke-linejoin="round"/><path d="M10.6 3.6 L8.8 6.4 L11.4 8 L8.8 10.4 L11.4 12.4 L8.8 14.6 L11 16.6 L9.6 18.6 M12 5 L10 18.4" fill="none" stroke="#c6c6c6" stroke-width="0.9"/></svg>
<svg class="abs" style="left:852px;top:48px" width="20" height="19" viewBox="0 0 20 19"><path d="M1 7 L5.4 4.4 L8 5.6 L11 2.6 L13.6 6.4 V13.4 L5.4 17.6 L1 14.4z" fill="#dedede" stroke="#c6c6c6" stroke-width="0.9" stroke-linejoin="round"/><path d="M1 7 L5.4 10 L13.6 6.4 M5.4 10 V17.6" fill="none" stroke="#c6c6c6" stroke-width="0.9"/><path d="M15.4 3.4 h1.6 V10.4 h2 L16.2 14.4 L13.6 10.4 h1.8z" fill="#c4c4c4"/></svg>
<svg class="abs" style="left:851px;top:72px" width="21" height="20" viewBox="0 0 21 20"><path d="M2 8 L8.4 4.6 L11.4 1.6 L14.4 5.6 L10.4 8.4 L6 10.4z" fill="#e9e9e9" stroke="#c6c6c6" stroke-width="0.9" stroke-linejoin="round"/><path d="M1.2 12.4 L5.4 10.6 L9 12.6 L13.4 10.6 V15.4 L6.4 19 L1.2 16.4z" fill="#eeeeee" stroke="#c6c6c6" stroke-width="1" stroke-linejoin="round"/><path d="M1.2 12.4 L6.4 15.4 L13.4 10.6 M6.4 15.4 V19" fill="none" stroke="#c6c6c6" stroke-width="0.9"/><path d="M16.4 2.4 h1.6 V9.4 h2 L17.2 13.4 L14.6 9.4 h1.8z" fill="#c4c4c4"/></svg>
<svg class="abs" style="left:852px;top:99px" width="19" height="20" viewBox="0 0 19 20"><path d="M1.4 4.6 L8.4 1.2 L17.4 4 V7 L8.4 10.6 L1.4 7.6z" fill="#eeeeee" stroke="#c6c6c6" stroke-width="1" stroke-linejoin="round"/><path d="M1.4 4.6 L8.4 7.6 L17.4 4 M8.4 7.6 V10.6" fill="none" stroke="#c6c6c6" stroke-width="0.9"/><path d="M1 10.4 L8.6 13 L18 9" fill="none" stroke="#c6c6c6" stroke-width="1"/><path d="M1.4 12.6 L8.4 15.4 L17.4 11.8 V15 L8.4 18.8 L1.4 15.8z" fill="#eeeeee" stroke="#c6c6c6" stroke-width="1" stroke-linejoin="round"/></svg>
<svg class="abs" style="left:998px;top:49px" width="21" height="20" viewBox="0 0 21 20"><circle cx="3.4" cy="3.6" r="2.4" fill="#dedede" stroke="#c6c6c6" stroke-width="1"/><path d="M7.4 6.4 L18.4 2.4 V14.4 L7.4 18.6z" fill="#e0e0e0" stroke="#c6c6c6" stroke-width="0.9"/><path d="M12.6 1 V19" stroke="#c6c6c6" stroke-width="1" stroke-dasharray="2 1.2"/></svg>
<svg class="abs" style="left:1051px;top:49px" width="20" height="19" viewBox="0 0 20 19"><path d="M1.4 1.6 Q5.6 1 5.4 6 Q4.6 11 2.4 13.4 Q2.2 17.2 8 16.8 Q12.6 16.4 13.4 11 Q13.8 4 18.6 2" fill="none" stroke="#cfcfcf" stroke-width="1.3"/></svg>
<svg class="abs" style="left:1005.4px;top:110.3px" width="5.6" height="4" viewBox="0 0 5.6 4"><path d="M0 0 H5.6 L2.8 3.0999999999999996z" fill="#8e8e8e"/></svg>
<svg class="abs" style="left:1057.5px;top:110.3px" width="5.6" height="4" viewBox="0 0 5.6 4"><path d="M0 0 H5.6 L2.8 3.0999999999999996z" fill="#8e8e8e"/></svg>
<svg class="abs" style="left:14px;top:174px" width="20" height="20" viewBox="0 0 20 20"><path d="M1.4 7.4 L5.6 4.4 Q6 1.6 9 1.2 Q12 1.6 12.4 4.6 L12.6 8 L17.6 10.4 V15.4 L11.4 18.8 L1.4 12z" fill="#f5c91e" stroke="#a87c08" stroke-width="1" stroke-linejoin="round"/><path d="M5.6 4.6 Q9 6.6 12.4 4.6 M1.6 7.6 L11.4 13.6 L17.6 10.4 M11.4 13.6 V18.6 M8.4 6 V11.6" fill="none" stroke="#a87c08" stroke-width="0.9"/><path d="M6 4.4 Q9 2.4 12 4.4 Q9 6 6 4.4z" fill="#fbe27a"/></svg>
<svg class="abs" style="left:53px;top:174px" width="20" height="20" viewBox="0 0 20 20"><rect x="1.2" y="1.4" width="17.4" height="17" rx="1.2" fill="#fff" stroke="#22303c" stroke-width="1.4"/><rect x="1.9" y="2.1" width="16" height="2.6" fill="#5b9bd0"/><g fill="#2a6a9e" stroke="#153c5c" stroke-width="0.6"><rect x="3.6" y="6.6" width="3.6" height="2"/><rect x="3.6" y="10.4" width="3.6" height="2"/><rect x="3.6" y="14.2" width="3.6" height="2"/></g><path d="M9 7.6 h7 M9 11.4 h7 M9 15.2 h7" stroke="#333" stroke-width="1.1"/></svg>
<svg class="abs" style="left:95px;top:174px" width="17" height="20" viewBox="0 0 17 20"><path d="M2 1.4 V18.6 M0.6 1.6 h3 M0.6 18.4 h3 M2 4.6 h5 M2 13.4 h6" fill="none" stroke="#222" stroke-width="1.4"/><rect x="6.6" y="2" width="4.8" height="4.6" fill="#fff" stroke="#222" stroke-width="1.1"/><path d="M9 6.6 V9.4 h3" fill="none" stroke="#222" stroke-width="1.1"/><rect x="9.6" y="11.4" width="4.8" height="4.6" fill="#fff" stroke="#222" stroke-width="1.1"/><path d="M7 4.2 h-2 M11.4 4.2 h1.4" stroke="#222" stroke-width="1"/></svg>
<svg class="abs" style="left:133px;top:174px" width="20" height="20" viewBox="0 0 20 20"><circle cx="10" cy="10" r="6.1" fill="none" stroke="#111" stroke-width="1.9"/><path d="M10 0.8 V19.2 M0.8 10 H19.2" stroke="#111" stroke-width="1.7"/></svg>
<svg class="abs" style="left:174px;top:173.5px" width="19" height="19" viewBox="0 0 19 19"><defs><clipPath id="cb174"><circle cx="9.5" cy="9.5" r="9"/></clipPath><radialGradient id="bg174" cx="0.35" cy="0.3" r="0.8"><stop offset="0" stop-color="#fff" stop-opacity="0.55"/><stop offset="0.5" stop-color="#fff" stop-opacity="0"/><stop offset="1" stop-color="#000" stop-opacity="0.25"/></radialGradient></defs><g clip-path="url(#cb174)"><rect x="0" y="0" width="9.5" height="9.5" fill="#2f6fd8"/><rect x="9.5" y="0" width="9.5" height="9.5" fill="#d82a20"/><rect x="0" y="9.5" width="9.5" height="9.5" fill="#38a830"/><rect x="9.5" y="9.5" width="9.5" height="9.5" fill="#f0b818"/><path d="M9.5 9.5 L0 11.5 L0 0 L10.5 0z" fill="#2f6fd8"/><path d="M9.5 9.5 L10.5 0 L19 0 L19 12.5z" fill="#d82a20"/><path d="M9.5 9.5 L19 12.5 L19 19 L6.5 19z" fill="#f0b818"/><path d="M9.5 9.5 L6.5 19 L0 19 L0 11.5z" fill="#38a830"/><circle cx="9.5" cy="9.5" r="9" fill="url(#bg174)"/></g></svg>
<svg class="abs" style="left:183px;top:175px" width="10" height="12" viewBox="0 0 10 12"><ellipse cx="5" cy="6" rx="2.6" ry="5" transform="rotate(-28 5 6)" fill="#1a1010"/><ellipse cx="5.6" cy="6.4" rx="1.2" ry="3.4" transform="rotate(-28 5 6)" fill="#4a3030"/></svg>
<svg class="abs" style="left:10px;top:204px" width="20" height="18" viewBox="0 0 20 18"><path d="M1 9.4 Q4.6 4.4 8 6.6 L12 1 L18.8 7.6 Q16 12 12.6 10.6 L7.6 17 Q3.6 15.4 1 9.4z" fill="#5c9cc2" stroke="#1c4a68" stroke-width="1" stroke-linejoin="round"/><path d="M4.4 6.4 L11 13.4 M8.2 3.4 L15.6 10.4" stroke="#1c4a68" stroke-width="0.8" fill="none"/><path d="M2.6 9.6 Q5.4 6.6 8 8 L12 3" fill="none" stroke="#a4d0ea" stroke-width="1"/></svg>
<svg class="abs" style="left:952px;top:130px" width="20" height="20" viewBox="0 0 20 20"><path d="M8.2 11.8 L1.6 18.4" stroke="#3d86b8" stroke-width="3" stroke-linecap="round"/><path d="M8.2 11.8 L1.6 18.4" stroke="#8cc4e6" stroke-width="1" stroke-linecap="round"/><circle cx="12" cy="7.6" r="6" fill="#f4f6f8" stroke="#6c6c6c" stroke-width="1.5"/><path d="M12 3.4 l1.6 1.8 h-3.2z M12 11.8 l1.6 -1.8 h-3.2z M7.8 7.6 l1.8 -1.6 v3.2z M16.2 7.6 l-1.8 -1.6 v3.2z" fill="#555"/></svg>
<svg class="abs" style="left:983px;top:130px" width="14" height="14" viewBox="0 0 14 14"><rect x="0.6" y="0.6" width="12.6" height="12.6" fill="none" stroke="#444" stroke-width="1" stroke-dasharray="2.4 1.6"/></svg>
<svg class="abs" style="left:976px;top:130px" width="20" height="20" viewBox="0 0 20 20"><path d="M8.2 11.8 L1.6 18.4" stroke="#3d86b8" stroke-width="3" stroke-linecap="round"/><path d="M8.2 11.8 L1.6 18.4" stroke="#8cc4e6" stroke-width="1" stroke-linecap="round"/><circle cx="12" cy="7.6" r="6" fill="#f4f6f8" stroke="#6c6c6c" stroke-width="1.5"/></svg>
<svg class="abs" style="left:1003px;top:130px" width="21" height="20" viewBox="0 0 21 20"><g transform="rotate(-38 10 10)"><rect x="1" y="6.6" width="8" height="7" rx="1.4" fill="#b9b9b9" stroke="#6e6e6e" stroke-width="1"/><rect x="8.6" y="7.4" width="7" height="5.4" fill="#d6d6d6" stroke="#6e6e6e" stroke-width="1"/><rect x="15.2" y="6.8" width="3" height="6.6" rx="0.8" fill="#c4c4c4" stroke="#6e6e6e" stroke-width="1"/></g><path d="M19.6 13.6 H14 V11.6 L10.4 14.6 L14 17.6 V15.6 H19.6z" fill="#2f7fb6"/></svg>
<svg class="abs" style="left:1029px;top:131px" width="20" height="19" viewBox="0 0 20 19"><path d="M1.4 6 Q5.6 1.2 10 3.4 Q14.4 1.2 18.6 6 V14.6 Q14.4 18.8 10 16.6 Q5.6 18.8 1.4 14.6z" fill="#eaeaea" stroke="#d2d2d2" stroke-width="1"/><path d="M6.2 8 V17 M10 9 V16.6 M13.8 8 V17" stroke="#d6d6d6" stroke-width="1.3"/><path d="M1.4 6 Q5.6 9.8 10 8 Q14.4 9.8 18.6 6" fill="none" stroke="#d2d2d2" stroke-width="1"/></svg>
<svg class="abs" style="left:1054px;top:130px" width="21" height="20" viewBox="0 0 21 20"><path d="M9 0.6 L2.6 8 L6.4 8 L3.6 12.6 L12 5.6 L8.2 5.6 L11.6 0.6z" fill="#f5a11c" stroke="#d96f10" stroke-width="0.7"/><g transform="rotate(-38 10 10)"><rect x="1.4" y="7.6" width="8" height="7" rx="1.4" fill="#b9b9b9" stroke="#6e6e6e" stroke-width="1"/><rect x="9" y="8.4" width="6.4" height="5.4" fill="#d6d6d6" stroke="#6e6e6e" stroke-width="1"/><rect x="15" y="7.8" width="3" height="6.6" rx="0.8" fill="#c4c4c4" stroke="#6e6e6e" stroke-width="1"/></g><text x="11.6" y="19.6" font-family="Liberation Serif, serif" font-weight="bold" font-size="11.5" fill="#2f7fb6">A</text></svg>
<svg class="abs" style="left:1081px;top:130px" width="21" height="20" viewBox="0 0 21 20"><path d="M1.2 7 L6.6 1.2 H19.4 V13.6 L13.6 18.8" fill="none" stroke="#444" stroke-width="1"/><path d="M6.6 1.2 V7 M19.4 1.2 L13.6 7 M19.4 13.6 H13.6" fill="none" stroke="#666" stroke-width="0.8"/><rect x="1.2" y="7" width="12.4" height="11.8" fill="#7db8e2" stroke="#1f587f" stroke-width="1.1"/><path d="M10 1.6 v4 M8.6 4 l1.4 1.8 l1.4 -1.8 M19 10 h-4 M16.6 8.6 l-1.8 1.4 l1.8 1.4" fill="none" stroke="#333" stroke-width="0.9"/></svg>
<svg class="abs" style="left:1107.8px;top:138.4px" width="5.6" height="4" viewBox="0 0 5.6 4"><path d="M0 0 H5.6 L2.8 3.0999999999999996z" fill="#8e8e8e"/></svg>
<svg class="abs" style="left:1122px;top:130px" width="19" height="20" viewBox="0 0 19 20"><path d="M1.2 4.4 L7.4 1 L17.6 3.4 V15.6 L11.4 19 L1.2 16z" fill="#fdfdfd" stroke="#4a4a4a" stroke-width="1" stroke-linejoin="round"/><path d="M1.2 4.4 L7.4 1 L11 1.8 L9 6.4 V18.2 L1.2 16z" fill="#6aaedb"/><path d="M2.4 5.6 L8 7 V17 L2.4 15.4z" fill="#9fd0ee"/><path d="M1.2 4.4 L11.4 6.8 L17.6 3.4 M11.4 6.8 V19" fill="none" stroke="#4a4a4a" stroke-width="0.9"/></svg>
<svg class="abs" style="left:1147.6px;top:138.4px" width="5.6" height="4" viewBox="0 0 5.6 4"><path d="M0 0 H5.6 L2.8 3.0999999999999996z" fill="#8e8e8e"/></svg>
<svg class="abs" style="left:1161px;top:132px" width="21" height="16" viewBox="0 0 21 16"><path d="M1 8 Q10.4 -1.6 20 8 Q10.4 17.6 1 8z" fill="#e9e9e9" stroke="#9a9a9a" stroke-width="1.1"/><circle cx="10.4" cy="8" r="4.2" fill="#6e6e6e"/><circle cx="10.4" cy="8" r="1.8" fill="#2c2c2c"/><path d="M10.4 0 V16" stroke="#444" stroke-width="1"/></svg>
<svg class="abs" style="left:1188px;top:138.4px" width="5.6" height="4" viewBox="0 0 5.6 4"><path d="M0 0 H5.6 L2.8 3.0999999999999996z" fill="#8e8e8e"/></svg>
<svg class="abs" style="left:1201px;top:130px" width="21" height="21" viewBox="0 0 21 21"><circle cx="8.6" cy="8.6" r="7.8" fill="#ececec" stroke="#dcdcdc" stroke-width="0.8"/><circle cx="6.4" cy="5.6" r="2.6" fill="#f8f8f8"/><path d="M9 17 L10 13.4 L16.6 6.8 L19.2 9.4 L12.6 16z" fill="#e2e2e2" stroke="#d0d0d0" stroke-width="0.8"/></svg>
<svg class="abs" style="left:1227px;top:130px" width="20" height="21" viewBox="0 0 20 21"><path d="M1 12 H19 V20 H1z" fill="#e6e6e6"/><path d="M1 16 h4.5 v4 H1z M10 16 h4.5 v4 H10z M5.5 12 h4.5 v4 H5.5z M14.5 12 H19 v4 h-4.5z" fill="#f3f3f3"/><circle cx="10" cy="8.6" r="7.2" fill="#e9e9e9" stroke="#dcdcdc" stroke-width="0.8"/><circle cx="7.8" cy="5.6" r="2.4" fill="#f6f6f6"/></svg>
<svg class="abs" style="left:1253.6px;top:138.4px" width="5.6" height="4" viewBox="0 0 5.6 4"><path d="M0 0 H5.6 L2.8 3.0999999999999996z" fill="#8e8e8e"/></svg>
<svg class="abs" style="left:1267px;top:131px" width="20" height="18" viewBox="0 0 20 18"><rect x="0.9" y="0.9" width="18.2" height="11.8" fill="#e4e7ea" stroke="#505050" stroke-width="1.6"/><path d="M8.4 12.8 h3.2 v2.4 h-3.2z" fill="#505050"/><path d="M5.6 16 h8.8" stroke="#505050" stroke-width="1.6"/></svg>
<svg class="abs" style="left:1293.4px;top:138.4px" width="5.6" height="4" viewBox="0 0 5.6 4"><path d="M0 0 H5.6 L2.8 3.0999999999999996z" fill="#8e8e8e"/></svg>
<svg class="abs" style="left:1826px;top:133px" width="13" height="14" viewBox="0 0 13 14"><rect x="0.6" y="0.6" width="11.6" height="12.6" fill="none" stroke="#a9a9a9" stroke-width="1.1"/><path d="M5.6 4.4 V9.6 L2.2 7z" fill="#a9a9a9"/></svg>
<svg class="abs" style="left:1852px;top:133px" width="13" height="14" viewBox="0 0 13 14"><rect x="0.6" y="0.6" width="11.6" height="12.6" fill="none" stroke="#a9a9a9" stroke-width="1.1"/><path d="M7 4.4 V9.6 L10.4 7z" fill="#a9a9a9"/></svg>
<svg class="abs" style="left:1880px;top:143px" width="11" height="3" viewBox="0 0 11 3"><rect x="0" y="0.4" width="10" height="1.6" fill="#a9a9a9"/></svg>
<svg class="abs" style="left:1903px;top:132px" width="17" height="15" viewBox="0 0 17 15"><rect x="5.2" y="0.7" width="10.8" height="7.6" fill="none" stroke="#a9a9a9" stroke-width="1.3"/><rect x="0.8" y="5.6" width="10.4" height="8" fill="#fff" stroke="#a9a9a9" stroke-width="1.3"/></svg>
<svg class="abs" style="left:1931px;top:134px" width="12" height="12" viewBox="0 0 12 12"><path d="M0.8 0.8 L11 11 M11 0.8 L0.8 11" stroke="#a9a9a9" stroke-width="1.3"/></svg>
<svg class="abs" style="left:1853px;top:160px" width="30" height="25" viewBox="0 0 30 25"><path d="M2 13.6 L5.6 9.6 L11.4 15.4 L25.4 1.4 L29 5 L11.4 23z" fill="#cfe8c8"/></svg>
<svg class="abs" style="left:1898px;top:189px" width="26" height="25" viewBox="0 0 26 25"><path d="M1 5 L5 1 L13 9 L21 1 L25 5 L17 12.6 L25 20.4 L21 24.4 L13 16.4 L5 24.4 L1 20.4 L9 12.6z" fill="#f6d0d0" stroke="#f6d0d0" stroke-width="1" stroke-linejoin="round"/></svg>
<div class="abs" style="left:1931px;top:201px;width:26px;height:24px;background:#fbfbfb;border:1px solid #a6a6a6;border-right:none"></div>
<div class="abs" style="left:1931px;top:224px;width:26px;height:25px;background:#dcdcdc;border:1px solid #a6a6a6;border-right:none"></div>
<div class="abs" style="left:1931px;top:248px;width:26px;height:25.5px;background:#dcdcdc;border:1px solid #a6a6a6;border-right:none"></div>
<div class="abs" style="left:1931px;top:272.5px;width:26px;height:25.0px;background:#dcdcdc;border:1px solid #a6a6a6;border-right:none"></div>
<div class="abs" style="left:1931px;top:296.5px;width:26px;height:25.0px;background:#dcdcdc;border:1px solid #a6a6a6;border-right:none"></div>
<div class="abs" style="left:1931px;top:320.5px;width:26px;height:25.0px;background:#dcdcdc;border:1px solid #a6a6a6;border-right:none"></div>
<div class="abs" style="left:1931px;top:344.5px;width:26px;height:25.0px;background:#dcdcdc;border:1px solid #a6a6a6;border-right:none"></div>
<div class="abs" style="left:1931px;top:368.5px;width:26px;height:25.0px;background:#dcdcdc;border:1px solid #a6a6a6;border-right:none"></div>
<svg class="abs" style="left:1934px;top:203px" width="21" height="20" viewBox="0 0 21 20"><path d="M1.2 10.4 L10.4 2 L19.6 10.4" fill="none" stroke="#1f5f8a" stroke-width="2.2" stroke-linejoin="miter"/><path d="M4.4 9.6 V18.6 H16.4 V9.6" fill="#fff" stroke="#222" stroke-width="1.4"/><path d="M8.6 18.6 V12.6 H12.2 V18.6" fill="none" stroke="#222" stroke-width="1.2"/></svg>
<svg class="abs" style="left:1935px;top:226px" width="19" height="21" viewBox="0 0 19 21"><g fill="#f6f6f6" stroke="#2a2a2a" stroke-width="1.1" stroke-linejoin="round"><path d="M1.6 5.6 L5 3.6 L8.4 5.6 V17 L5 19.6 L1.6 17z"/><path d="M6.4 4.4 L9.8 2.4 L13.2 4.4 V16.4 L9.8 19 L6.4 16.4z"/><path d="M11.2 3.2 L14.6 1.2 L17.6 3.2 V15.4 L14.6 18 L11.2 15.4z"/></g></svg>
<svg class="abs" style="left:1933px;top:250px" width="22" height="20" viewBox="0 0 22 20"><path d="M1.4 17.6 V2.4 H8 L9.6 4.6 H17 V8" fill="#e9e9e9" stroke="#3a3a3a" stroke-width="1.2" stroke-linejoin="round"/><path d="M1.4 17.6 L5.6 8 H21 L16.8 17.6z" fill="#fbfbfb" stroke="#3a3a3a" stroke-width="1.2" stroke-linejoin="round"/></svg>
<svg class="abs" style="left:1934px;top:275px" width="20" height="19" viewBox="0 0 20 19"><rect x="0.8" y="0.8" width="18.4" height="17" rx="1.6" fill="#f4f4f4" stroke="#2a2a2a" stroke-width="1.4"/><path d="M3.4 4 h7.4 v3 h-2.2 v4.4 h3.6 v3.2 H3.4 v-3.2 h2.8 V7 H3.4z" fill="#f2c21c" stroke="#8a6a08" stroke-width="0.7"/><rect x="12.6" y="3.8" width="3.6" height="3" fill="#f2c21c" stroke="#8a6a08" stroke-width="0.7"/><rect x="14.6" y="8.6" width="2.6" height="6.4" fill="#9a9a9a" stroke="#444" stroke-width="0.6"/></svg>
<svg class="abs" style="left:1935px;top:299.5px" width="18.0" height="18.0" viewBox="0 0 18.0 18.0"><defs><clipPath id="cb1935"><circle cx="9.0" cy="9.0" r="8.5"/></clipPath><radialGradient id="bg1935" cx="0.35" cy="0.3" r="0.8"><stop offset="0" stop-color="#fff" stop-opacity="0.55"/><stop offset="0.5" stop-color="#fff" stop-opacity="0"/><stop offset="1" stop-color="#000" stop-opacity="0.25"/></radialGradient></defs><g clip-path="url(#cb1935)"><rect x="0" y="0" width="9.0" height="9.0" fill="#2f6fd8"/><rect x="9.0" y="0" width="9.0" height="9.0" fill="#d82a20"/><rect x="0" y="9.0" width="9.0" height="9.0" fill="#38a830"/><rect x="9.0" y="9.0" width="9.0" height="9.0" fill="#f0b818"/><path d="M9.0 9.0 L0 11.0 L0 0 L10.0 0z" fill="#2f6fd8"/><path d="M9.0 9.0 L10.0 0 L18.0 0 L18.0 12.0z" fill="#d82a20"/><path d="M9.0 9.0 L18.0 12.0 L18.0 18.0 L6.0 18.0z" fill="#f0b818"/><path d="M9.0 9.0 L6.0 18.0 L0 18.0 L0 11.0z" fill="#38a830"/><circle cx="9.0" cy="9.0" r="8.5" fill="url(#bg1935)"/></g></svg>
<svg class="abs" style="left:1934px;top:323px" width="20" height="19" viewBox="0 0 20 19"><rect x="1" y="1" width="18" height="16.6" rx="1" fill="#fff" stroke="#22303c" stroke-width="1.4"/><rect x="1.7" y="1.7" width="16.6" height="2.6" fill="#5b9bd0"/><g fill="#2a6a9e" stroke="#153c5c" stroke-width="0.6"><rect x="3.4" y="6.4" width="3.6" height="2"/><rect x="3.4" y="10" width="3.6" height="2"/><rect x="3.4" y="13.6" width="3.6" height="2"/></g><path d="M8.8 7.4 h7.4 M8.8 11 h7.4 M8.8 14.6 h7.4" stroke="#333" stroke-width="1.1"/></svg>
<svg class="abs" style="left:1934px;top:346.5px" width="21" height="21" viewBox="0 0 21 21"><defs><radialGradient id="gl" cx="0.5" cy="0.35" r="0.7"><stop offset="0" stop-color="#4f9ad8"/><stop offset="0.55" stop-color="#15508c"/><stop offset="1" stop-color="#061c3a"/></radialGradient></defs><circle cx="10.5" cy="10.5" r="9.8" fill="url(#gl)"/><path d="M3.6 7 Q10.5 1.6 17.4 7" fill="none" stroke="#a8d4f4" stroke-width="1.3"/><path d="M8.6 7.6 L13.6 10.5 L8.6 13.4z" fill="none" stroke="#e6f2fc" stroke-width="1.1"/><path d="M5.6 16 Q10.5 19 15.4 16" fill="none" stroke="#7ab4e4" stroke-width="1.1"/></svg>
<svg class="abs" style="left:1933px;top:371px" width="23" height="21" viewBox="0 0 23 21"><rect x="1" y="1" width="15.4" height="11.4" fill="#fff" stroke="#2a2a2a" stroke-width="1.4"/><path d="M3.4 4 h10 M3.4 6.6 h7" stroke="#2a5a8a" stroke-width="1.3"/><path d="M5 13 v2.6 M2.6 16 h7" stroke="#2a2a2a" stroke-width="1.3"/><path d="M9 10.6 L12.6 8.4 L15 9.8 L17.4 8.2 L21.6 10.6 V16.4 L16.6 19.6 L9 15.4z" fill="#f2c21c" stroke="#8a6a08" stroke-width="0.9" stroke-linejoin="round"/><path d="M14.4 8.6 L17.4 7 L20.2 8.6 V12 L17.4 13.6 L14.4 12z" fill="#4f9ad8" stroke="#1f4f7a" stroke-width="0.8"/></svg>
<svg class="abs" style="left:304px;top:157px" width="8" height="10" viewBox="0 0 8 10"><path d="M1.6 1 V9 L6.4 5z" fill="#222"/></svg>
<svg class="abs" style="left:322px;top:153px" width="20" height="20" viewBox="0 0 20 20"><path d="M1.4 7.4 L5.6 4.4 Q6 1.6 9 1.2 Q12 1.6 12.4 4.6 L12.6 8 L17.6 10.4 V15.4 L11.4 18.8 L1.4 12z" fill="#f5c91e" stroke="#a87c08" stroke-width="1" stroke-linejoin="round"/><path d="M5.6 4.6 Q9 6.6 12.4 4.6 M1.6 7.6 L11.4 13.6 L17.6 10.4 M11.4 13.6 V18.6 M8.4 6 V11.6" fill="none" stroke="#a87c08" stroke-width="0.9"/><path d="M6 4.4 Q9 2.4 12 4.4 Q9 6 6 4.4z" fill="#fbe27a"/></svg>
<svg class="abs" style="left:10px;top:289px" width="24" height="24" viewBox="0 0 24 24"><g ><path d="M12 4.6 L17 10 H14 V18.6 H10 V10 H7z" fill="#5ca4cf" stroke="#123a58" stroke-width="1.1" stroke-linejoin="round"/></g></svg>
<svg class="abs" style="left:10px;top:319px" width="24" height="24" viewBox="0 0 24 24"><g transform="translate(0 24) scale(1 -1)"><path d="M12 4.6 L17 10 H14 V18.6 H10 V10 H7z" fill="#5ca4cf" stroke="#123a58" stroke-width="1.1" stroke-linejoin="round"/></g></svg>
<svg class="abs" style="left:10px;top:477px" width="24" height="24" viewBox="0 0 24 24"><g ><path d="M12 4.6 L17 10 H14 V18.6 H10 V10 H7z" fill="#5ca4cf" stroke="#123a58" stroke-width="1.1" stroke-linejoin="round"/></g></svg>
<svg class="abs" style="left:10px;top:507px" width="24" height="24" viewBox="0 0 24 24"><g transform="translate(0 24) scale(1 -1)"><path d="M12 4.6 L17 10 H14 V18.6 H10 V10 H7z" fill="#5ca4cf" stroke="#123a58" stroke-width="1.1" stroke-linejoin="round"/></g></svg>
<svg class="abs" style="left:10px;top:415px" width="24" height="24" viewBox="0 0 24 24"><path d="M5.2 13.6 A7 7 0 1 1 18.6 14.4" fill="none" stroke="#1d5f8f" stroke-width="1.6"/><path d="M15 13 L19 16.6 L21.4 11.8z" fill="#111"/><path d="M18.4 15.4 A7 7 0 0 1 5.4 14.6" fill="none" stroke="#d0d0d0" stroke-width="1.4"/></svg>
<svg class="abs" style="left:1742px;top:1092px" width="18" height="17" viewBox="0 0 18 17"><path d="M1.4 10.4 L6 1.6 L10.6 10.4z" fill="#f6c21a" stroke="#6a4a04" stroke-width="0.9" stroke-linejoin="round"/><path d="M6 4.6 V7.6 M6 8.6 v0.9" stroke="#222" stroke-width="1"/><path d="M2 15.6 h1.6 v-1.4 H2z M4.6 15.6 h1.8 v-2.6 H4.6z M7.4 15.6 h1.8 v-4 H7.4z M10.2 15.6 h2 V9.4 h-2z" fill="#1f5f8a"/><path d="M9.6 7.6 L13.6 3.4 L12 2 L16.6 1.2 L16 5.8 L14.6 4.4 L10.6 8.6z" fill="#111"/></svg>
<svg class="abs" style="left:1917px;top:1092px" width="20" height="17" viewBox="0 0 20 17"><path d="M1 6.6 L6.4 1.4 L18.6 5 V9 L12 15.6 L1 10.6z" fill="#f0f0f0" stroke="#2a2a2a" stroke-width="1.2" stroke-linejoin="round"/><path d="M1 6.6 L12 11.4 L18.6 5 M12 11.4 V15.6" fill="none" stroke="#2a2a2a" stroke-width="1"/><ellipse cx="9.6" cy="6.2" rx="3.6" ry="2" fill="none" stroke="#2a2a2a" stroke-width="1" transform="rotate(14 9.6 6.2)"/></svg>
<svg class="abs" style="left:1944px;top:1096px" width="12" height="12" viewBox="0 0 12 12"><g fill="#b4b4b4"><rect x="8" y="0" width="2" height="2"/><rect x="4" y="4" width="2" height="2"/><rect x="8" y="4" width="2" height="2"/><rect x="0" y="8" width="2" height="2"/><rect x="4" y="8" width="2" height="2"/><rect x="8" y="8" width="2" height="2"/></g></svg>
<svg class="abs" style="left:0;top:0" width="1958" height="1110" viewBox="0 0 1958 1110">
<defs><linearGradient id="gMain" gradientUnits="userSpaceOnUse" x1="538.2" y1="553.9" x2="633.0" y2="793.1"><stop offset="0" stop-color="#bdbaf6"/><stop offset="0.04" stop-color="#c2c0fe"/><stop offset="0.11" stop-color="#c4c2ff"/><stop offset="0.18" stop-color="#c0bdfb"/><stop offset="0.4" stop-color="#a9a6de"/><stop offset="0.54" stop-color="#9794c8"/><stop offset="0.76" stop-color="#827fae"/><stop offset="0.9" stop-color="#6c6a94"/><stop offset="1" stop-color="#5c5a80"/></linearGradient><linearGradient id="gMainIn" gradientUnits="userSpaceOnUse" x1="538.2" y1="553.9" x2="555.4" y2="597.4"><stop offset="0" stop-color="#3c3b50"/><stop offset="0.35" stop-color="#454459"/><stop offset="0.7" stop-color="#5a5876"/><stop offset="1" stop-color="#6a688e"/></linearGradient><linearGradient id="gBr" gradientUnits="userSpaceOnUse" x1="1604.8" y1="855.6" x2="1501.4" y2="1021.5"><stop offset="0" stop-color="#a09dd4"/><stop offset="0.1" stop-color="#adaae6"/><stop offset="0.2" stop-color="#b9b6f4"/><stop offset="0.32" stop-color="#c2c0fe"/><stop offset="0.4" stop-color="#c6c4ff"/><stop offset="0.48" stop-color="#bfbcf9"/><stop offset="0.58" stop-color="#a4a1d8"/><stop offset="0.7" stop-color="#8582b2"/><stop offset="0.82" stop-color="#69678f"/><stop offset="0.92" stop-color="#5a587d"/><stop offset="1" stop-color="#535176"/></linearGradient><linearGradient id="gBrIn" gradientUnits="userSpaceOnUse" x1="1604.8" y1="855.6" x2="1592.1" y2="876.1"><stop offset="0" stop-color="#3b3a4f"/><stop offset="0.5" stop-color="#45445a"/><stop offset="1" stop-color="#5c5a7c"/></linearGradient><linearGradient id="gPrev" gradientUnits="userSpaceOnUse" x1="937.6" y1="394.0" x2="852.1" y2="639.4"><stop offset="0" stop-color="#b8bcea"/><stop offset="0.26" stop-color="#bec2f2"/><stop offset="0.38" stop-color="#c1c5f6"/><stop offset="0.56" stop-color="#c7cbff"/><stop offset="0.66" stop-color="#c1c4f2"/><stop offset="0.76" stop-color="#b4b7e0"/><stop offset="0.94" stop-color="#a9acd2"/><stop offset="1" stop-color="#a8abd0"/></linearGradient><radialGradient id="gHi" cx="0.5" cy="0.5" r="0.5"><stop offset="0" stop-color="#f0f3ff" stop-opacity="1"/><stop offset="0.3" stop-color="#e6eaff" stop-opacity="0.85"/><stop offset="0.65" stop-color="#d4d9ff" stop-opacity="0.4"/><stop offset="1" stop-color="#c8ccfc" stop-opacity="0"/></radialGradient><linearGradient id="gPrevR" gradientUnits="userSpaceOnUse" x1="1010.0" y1="470.0" x2="1185.0" y2="560.0"><stop offset="0" stop-color="#9496bc" stop-opacity="0"/><stop offset="0.45" stop-color="#9496bc" stop-opacity="0.18"/><stop offset="1" stop-color="#9496bc" stop-opacity="0.5"/></linearGradient><linearGradient id="gPrevL" gradientUnits="userSpaceOnUse" x1="800.0" y1="508.0" x2="860.0" y2="540.0"><stop offset="0" stop-color="#a6a9d0" stop-opacity="0.55"/><stop offset="1" stop-color="#a6a9d0" stop-opacity="0"/></linearGradient><clipPath id="cpPrev"><path d="M799.9 508.4 L1093.5 390.7 L1195.4 628.4 L1195.4 628.4 L1195.4 627.5 L1195.4 626.5 L1195.4 625.6 L1195.4 624.7 L1195.4 623.7 L1195.4 622.7 L1195.3 621.7 L1195.3 620.7 L1195.2 619.7 L1195.1 618.6 L1195.0 617.5 L1194.8 616.5 L1194.6 615.4 L1194.3 614.3 L1194.1 613.1 L1193.8 612.0 L1193.4 610.9 L1193.0 609.8 L1192.6 608.6 L1192.1 607.5 L1191.6 606.4 L1191.0 605.3 L1190.4 604.2 L1189.8 603.1 L1189.1 602.0 L1188.3 600.9 L1187.5 599.8 L1186.7 598.8 L1185.8 597.7 L1184.9 596.7 L1183.9 595.7 L1182.9 594.7 L1181.9 593.7 L1180.8 592.7 L1179.6 591.7 L1178.5 590.8 L1177.3 589.9 L1176.1 589.0 L1174.9 588.2 L1173.6 587.3 L1172.3 586.5 L1171.0 585.7 L1169.7 585.0 L1168.4 584.3 L1167.0 583.6 L1165.7 582.9 L1164.3 582.3 L1163.0 581.7 L1161.7 581.1 L1160.3 580.6 L1159.0 580.0 L1157.6 579.6 L1156.3 579.1 L1154.9 578.7 L1153.5 578.2 L1152.2 577.9 L1150.8 577.5 L1149.4 577.2 L1148.0 576.9 L1146.5 576.6 L1145.1 576.3 L1143.5 576.1 L1142.0 575.9 L1140.4 575.7 L1138.8 575.5 L1137.2 575.4 L1135.4 575.3 L1133.7 575.2 L1131.9 575.1 L1130.0 575.0 L1128.1 575.0 L1126.2 575.0 L1124.3 575.0 L1122.4 575.0 L1120.4 575.1 L1118.5 575.2 L1116.5 575.3 L1114.5 575.4 L1112.5 575.5 L1110.6 575.7 L1108.6 575.9 L1106.6 576.1 L1104.6 576.4 L1102.6 576.7 L1100.5 577.0 L1098.4 577.4 L1096.3 577.8 L1094.1 578.3 L1091.9 578.8 L1089.7 579.4 L1087.3 580.1 L1084.9 580.8 L1082.5 581.5 L1080.0 582.3 L1077.5 583.2 L1075.0 584.1 L1072.6 585.0 L1070.1 586.0 L1067.5 587.0 L1065.0 588.1 L1062.6 589.3 L1060.2 590.4 L1057.9 591.6 L1055.6 592.9 L1053.4 594.1 L1051.2 595.5 L1049.0 596.8 L1047.0 598.2 L1045.0 599.6 L1043.0 601.0 L1041.2 602.5 L1039.3 603.9 L1037.6 605.4 L1035.9 607.0 L1034.2 608.5 L1032.6 610.0 L1031.1 611.6 L1029.7 613.2 L1028.2 614.8 L1026.8 616.4 L1025.5 618.1 L1024.2 619.7 L1023.0 621.4 L1021.8 623.1 L1020.6 624.9 L1019.5 626.7 L1018.4 628.5 L1017.3 630.4 L1016.3 632.3 L1015.2 634.3 L1014.2 636.3 L1013.3 638.3 L1012.3 640.4 L1011.4 642.5 L1010.5 644.6 L1009.6 646.8 L1008.8 649.0 L1008.0 651.2 L1007.2 653.4 L1006.5 655.6 L1005.8 657.8 L1005.1 660.1 L1004.5 662.3 L1003.8 664.6 L1003.3 666.9 L1002.7 669.1 L1002.3 671.4 L1001.8 673.6 L1001.3 675.9 L1000.9 678.2 L1000.5 680.6 L1000.2 682.9 L999.8 685.2 L999.5 687.6 L999.2 690.0 L999.0 692.4 L998.7 694.8 L998.5 697.3 L998.2 699.8 L998.0 702.2 L997.8 704.7 L997.6 707.2 Z"/></clipPath></defs>
<path d="M538.2 553.9 L537.3 554.3 L536.4 554.7 L535.6 555.1 L534.8 555.5 L533.9 556.0 L533.1 556.4 L532.3 557.0 L531.5 557.5 L530.8 558.0 L530.0 558.6 L529.3 559.2 L528.5 559.9 L527.8 560.5 L527.1 561.2 L526.4 561.9 L525.7 562.6 L525.0 563.4 L524.3 564.2 L523.7 565.0 L523.0 565.8 L522.4 566.6 L521.8 567.5 L521.2 568.4 L520.6 569.3 L520.0 570.2 L519.5 571.2 L518.9 572.2 L518.4 573.2 L517.9 574.2 L517.4 575.3 L516.9 576.3 L516.4 577.4 L516.0 578.5 L515.5 579.7 L515.1 580.8 L514.7 582.0 L514.3 583.2 L513.9 584.4 L513.5 585.6 L513.1 586.9 L512.8 588.2 L512.5 589.4 L512.2 590.8 L511.9 592.1 L511.6 593.4 L511.3 594.8 L511.1 596.2 L510.8 597.6 L510.6 599.0 L510.4 600.4 L510.2 601.9 L510.0 603.4 L509.9 604.9 L509.7 606.4 L509.6 607.9 L509.5 609.4 L509.4 611.0 L509.3 612.5 L509.2 614.1 L509.2 615.7 L1142.0 364.7 L1142.0 363.1 L1142.1 361.6 L1142.2 360.0 L1142.3 358.4 L1142.4 356.9 L1142.5 355.4 L1142.7 353.9 L1142.8 352.4 L1143.0 350.9 L1143.2 349.5 L1143.4 348.0 L1143.6 346.6 L1143.9 345.2 L1144.1 343.8 L1144.4 342.5 L1144.7 341.1 L1145.0 339.8 L1145.3 338.5 L1145.6 337.2 L1145.9 335.9 L1146.3 334.7 L1146.7 333.4 L1147.1 332.2 L1147.5 331.0 L1147.9 329.8 L1148.3 328.7 L1148.8 327.6 L1149.2 326.5 L1149.7 325.4 L1150.2 324.3 L1150.7 323.2 L1151.2 322.2 L1151.7 321.2 L1152.3 320.2 L1152.8 319.3 L1153.4 318.3 L1154.0 317.4 L1154.6 316.5 L1155.2 315.7 L1155.8 314.8 L1156.5 314.0 L1157.1 313.2 L1157.8 312.4 L1158.5 311.7 L1159.2 310.9 L1159.9 310.2 L1160.6 309.6 L1161.3 308.9 L1162.1 308.3 L1162.8 307.7 L1163.6 307.1 L1164.3 306.5 L1165.1 306.0 L1165.9 305.5 L1166.7 305.0 L1167.6 304.5 L1168.4 304.1 L1169.2 303.7 L1170.1 303.3 L1171.0 303.0 Z" fill="url(#gMainIn)"/>
<path d="M538.2 553.9 L537.3 554.3 L536.4 554.7 L535.6 555.1 L534.8 555.5 L533.9 556.0 L533.1 556.4 L532.3 557.0 L531.5 557.5 L530.8 558.0 L530.0 558.6 L529.3 559.2 L528.5 559.9 L527.8 560.5 L527.1 561.2 L526.4 561.9 L525.7 562.6 L525.0 563.4 L524.3 564.2 L523.7 565.0 L523.0 565.8 L522.4 566.6 L521.8 567.5 L521.2 568.4 L520.6 569.3 L520.0 570.2 L519.5 571.2 L518.9 572.2 L518.4 573.2 L517.9 574.2 L517.4 575.3 L516.9 576.3 L516.4 577.4 L516.0 578.5 L515.5 579.7 L515.1 580.8 L514.7 582.0 L514.3 583.2 L513.9 584.4 L513.5 585.6 L513.1 586.9 L512.8 588.2 L512.5 589.4 L512.2 590.8 L511.9 592.1 L511.6 593.4 L511.3 594.8 L511.1 596.2 L510.8 597.6 L510.6 599.0 L510.4 600.4 L510.2 601.9 L510.0 603.4 L509.9 604.9 L509.7 606.4 L509.6 607.9 L509.5 609.4 L509.4 611.0 L509.3 612.5 L509.2 614.1 L509.2 615.7 L1142.0 364.7" fill="none" stroke="#1b86c9" stroke-width="1.1"/>
<path d="M683.0 773.2 L683.1 768.5 L683.0 763.7 L682.8 758.8 L682.4 753.8 L682.0 748.7 L681.4 743.5 L680.6 738.2 L679.8 732.9 L678.8 727.5 L677.7 722.1 L676.4 716.6 L675.1 711.1 L673.6 705.6 L672.0 700.0 L670.3 694.4 L668.5 688.9 L666.6 683.3 L664.5 677.8 L662.4 672.3 L660.1 666.8 L657.8 661.4 L655.4 656.0 L652.9 650.7 L650.2 645.4 L647.6 640.2 L644.8 635.1 L642.0 630.1 L639.0 625.2 L636.1 620.4 L633.0 615.7 L629.9 611.1 L626.8 606.7 L623.6 602.3 L620.4 598.2 L617.1 594.1 L613.8 590.2 L610.5 586.5 L607.1 583.0 L603.8 579.6 L600.4 576.3 L597.0 573.3 L593.6 570.4 L590.2 567.8 L586.9 565.3 L583.5 563.0 L580.2 560.9 L576.9 559.1 L573.6 557.4 L570.3 555.9 L567.1 554.7 L563.9 553.6 L560.8 552.8 L557.8 552.2 L554.7 551.8 L551.8 551.6 L548.9 551.6 L546.1 551.9 L543.4 552.3 L540.7 553.0 L538.2 553.9 L1171.0 303.0 L1173.5 302.1 L1176.2 301.4 L1178.9 300.9 L1181.7 300.7 L1184.6 300.6 L1187.5 300.8 L1190.6 301.2 L1193.6 301.8 L1196.7 302.7 L1199.9 303.7 L1203.1 305.0 L1206.4 306.4 L1209.7 308.1 L1213.0 310.0 L1216.3 312.1 L1219.7 314.3 L1223.0 316.8 L1226.4 319.5 L1229.8 322.3 L1233.2 325.4 L1236.6 328.6 L1239.9 332.0 L1243.3 335.5 L1246.6 339.3 L1249.9 343.1 L1253.2 347.2 L1256.4 351.4 L1259.6 355.7 L1262.7 360.1 L1265.8 364.7 L1268.9 369.4 L1271.8 374.2 L1274.8 379.1 L1277.6 384.1 L1280.4 389.3 L1283.0 394.4 L1285.7 399.7 L1288.2 405.0 L1290.6 410.4 L1292.9 415.8 L1295.2 421.3 L1297.3 426.8 L1299.4 432.4 L1301.3 437.9 L1303.1 443.5 L1304.8 449.0 L1306.4 454.6 L1307.9 460.1 L1309.2 465.6 L1310.5 471.1 L1311.6 476.5 L1312.6 481.9 L1313.4 487.2 L1314.2 492.5 L1314.8 497.7 L1315.2 502.8 L1315.6 507.8 L1315.8 512.7 L1315.9 517.5 L1315.8 522.2 L1187.5 572.3 L1187.6 567.9 L1187.5 563.4 L1187.3 558.7 L1186.9 554.1 L1186.4 549.3 L1185.8 544.5 L1185.1 539.6 L1184.2 534.6 L1183.2 529.7 L1182.0 524.6 L1180.7 519.6 L1179.2 514.5 L1177.7 509.4 L1175.9 504.3 L1174.1 499.2 L1172.1 494.1 L1170.0 489.0 L1167.8 484.0 L1165.4 478.9 L1162.9 473.9 L1160.3 468.9 L1157.6 464.0 L1154.8 459.2 L1151.9 454.4 L1148.8 449.6 L1145.7 445.0 L1142.4 440.4 L1139.1 435.9 L1135.7 431.5 L1132.2 427.2 L1128.6 423.0 L1124.9 418.9 L1121.2 414.9 L1117.4 411.0 L1113.5 407.3 L1109.6 403.7 L1105.6 400.2 L1101.6 396.9 L1097.6 393.7 L1093.5 390.7 L799.9 508.4 L804.0 511.4 L808.0 514.6 L812.0 517.9 L816.0 521.4 L819.9 525.0 L823.8 528.7 L827.6 532.6 L831.3 536.6 L835.0 540.7 L838.6 544.9 L842.1 549.2 L845.5 553.6 L848.8 558.1 L852.1 562.7 L855.2 567.3 L858.3 572.1 L861.2 576.9 L864.0 581.7 L866.7 586.6 L869.3 591.6 L871.8 596.6 L874.2 601.7 L876.4 606.7 L878.5 611.8 L880.5 616.9 L882.3 622.0 L884.1 627.1 L885.6 632.2 L887.1 637.3 L888.4 642.3 L889.6 647.4 L890.6 652.3 L891.5 657.3 L892.2 662.2 L892.8 667.0 L893.3 671.8 L893.7 676.4 L893.9 681.1 L894.0 685.6 L893.9 690.0 Z" fill="url(#gMain)"/>
<path d="M683.0 773.2 L683.1 768.5 L683.0 763.7 L682.8 758.8 L682.4 753.8 L682.0 748.7 L681.4 743.5 L680.6 738.2 L679.8 732.9 L678.8 727.5 L677.7 722.1 L676.4 716.6 L675.1 711.1 L673.6 705.6 L672.0 700.0 L670.3 694.4 L668.5 688.9 L666.6 683.3 L664.5 677.8 L662.4 672.3 L660.1 666.8 L657.8 661.4 L655.4 656.0 L652.9 650.7 L650.2 645.4 L647.6 640.2 L644.8 635.1 L642.0 630.1 L639.0 625.2 L636.1 620.4 L633.0 615.7 L629.9 611.1 L626.8 606.7 L623.6 602.3 L620.4 598.2 L617.1 594.1 L613.8 590.2 L610.5 586.5 L607.1 583.0 L603.8 579.6 L600.4 576.3 L597.0 573.3 L593.6 570.4 L590.2 567.8 L586.9 565.3 L583.5 563.0 L580.2 560.9 L576.9 559.1 L573.6 557.4 L570.3 555.9 L567.1 554.7 L563.9 553.6 L560.8 552.8 L557.8 552.2 L554.7 551.8 L551.8 551.6 L548.9 551.6 L546.1 551.9 L543.4 552.3 L540.7 553.0 L538.2 553.9" fill="none" stroke="#1b86c9" stroke-width="1.1"/>
<path d="M1171.0 303.0 L1173.5 302.1 L1176.2 301.4 L1178.9 300.9 L1181.7 300.7 L1184.6 300.6 L1187.5 300.8 L1190.6 301.2 L1193.6 301.8 L1196.7 302.7 L1199.9 303.7 L1203.1 305.0 L1206.4 306.4 L1209.7 308.1 L1213.0 310.0 L1216.3 312.1 L1219.7 314.3 L1223.0 316.8 L1226.4 319.5 L1229.8 322.3 L1233.2 325.4 L1236.6 328.6 L1239.9 332.0 L1243.3 335.5 L1246.6 339.3 L1249.9 343.1 L1253.2 347.2 L1256.4 351.4 L1259.6 355.7 L1262.7 360.1 L1265.8 364.7 L1268.9 369.4 L1271.8 374.2 L1274.8 379.1 L1277.6 384.1 L1280.4 389.3 L1283.0 394.4 L1285.7 399.7 L1288.2 405.0 L1290.6 410.4 L1292.9 415.8 L1295.2 421.3 L1297.3 426.8 L1299.4 432.4 L1301.3 437.9 L1303.1 443.5 L1304.8 449.0 L1306.4 454.6 L1307.9 460.1 L1309.2 465.6 L1310.5 471.1 L1311.6 476.5 L1312.6 481.9 L1313.4 487.2 L1314.2 492.5 L1314.8 497.7 L1315.2 502.8 L1315.6 507.8 L1315.8 512.7 L1315.9 517.5 L1315.8 522.2 L1187.5 572.3 L1187.5 572.3 L1187.6 567.9 L1187.5 563.4 L1187.3 558.7 L1186.9 554.1 L1186.4 549.3 L1185.8 544.5 L1185.1 539.6 L1184.2 534.6 L1183.2 529.7 L1182.0 524.6 L1180.7 519.6 L1179.2 514.5 L1177.7 509.4 L1175.9 504.3 L1174.1 499.2 L1172.1 494.1 L1170.0 489.0 L1167.8 484.0 L1165.4 478.9 L1162.9 473.9 L1160.3 468.9 L1157.6 464.0 L1154.8 459.2 L1151.9 454.4 L1148.8 449.6 L1145.7 445.0 L1142.4 440.4 L1139.1 435.9 L1135.7 431.5 L1132.2 427.2 L1128.6 423.0 L1124.9 418.9 L1121.2 414.9 L1117.4 411.0 L1113.5 407.3 L1109.6 403.7 L1105.6 400.2 L1101.6 396.9 L1097.6 393.7 L1093.5 390.7" fill="none" stroke="#1b86c9" stroke-width="1.1"/>
<path d="M799.9 508.4 L804.0 511.4 L808.0 514.6 L812.0 517.9 L816.0 521.4 L819.9 525.0 L823.8 528.7 L827.6 532.6 L831.3 536.6 L835.0 540.7 L838.6 544.9 L842.1 549.2 L845.5 553.6 L848.8 558.1 L852.1 562.7 L855.2 567.3 L858.3 572.1 L861.2 576.9 L864.0 581.7 L866.7 586.6 L869.3 591.6 L871.8 596.6 L874.2 601.7 L876.4 606.7 L878.5 611.8 L880.5 616.9 L882.3 622.0 L884.1 627.1 L885.6 632.2 L887.1 637.3 L888.4 642.3 L889.6 647.4 L890.6 652.3 L891.5 657.3 L892.2 662.2 L892.8 667.0 L893.3 671.8 L893.7 676.4 L893.9 681.1 L894.0 685.6 L893.9 690.0 L683.0 773.2" fill="none" stroke="#1b86c9" stroke-width="1.1"/>
<path d="M543.7 551.7 L1166.0 304.9" fill="none" stroke="#111" stroke-width="1.4"/>
<path d="M799.9 508.4 L1093.5 390.7 L1195.4 628.4 L1195.4 628.4 L1195.4 627.5 L1195.4 626.5 L1195.4 625.6 L1195.4 624.7 L1195.4 623.7 L1195.4 622.7 L1195.3 621.7 L1195.3 620.7 L1195.2 619.7 L1195.1 618.6 L1195.0 617.5 L1194.8 616.5 L1194.6 615.4 L1194.3 614.3 L1194.1 613.1 L1193.8 612.0 L1193.4 610.9 L1193.0 609.8 L1192.6 608.6 L1192.1 607.5 L1191.6 606.4 L1191.0 605.3 L1190.4 604.2 L1189.8 603.1 L1189.1 602.0 L1188.3 600.9 L1187.5 599.8 L1186.7 598.8 L1185.8 597.7 L1184.9 596.7 L1183.9 595.7 L1182.9 594.7 L1181.9 593.7 L1180.8 592.7 L1179.6 591.7 L1178.5 590.8 L1177.3 589.9 L1176.1 589.0 L1174.9 588.2 L1173.6 587.3 L1172.3 586.5 L1171.0 585.7 L1169.7 585.0 L1168.4 584.3 L1167.0 583.6 L1165.7 582.9 L1164.3 582.3 L1163.0 581.7 L1161.7 581.1 L1160.3 580.6 L1159.0 580.0 L1157.6 579.6 L1156.3 579.1 L1154.9 578.7 L1153.5 578.2 L1152.2 577.9 L1150.8 577.5 L1149.4 577.2 L1148.0 576.9 L1146.5 576.6 L1145.1 576.3 L1143.5 576.1 L1142.0 575.9 L1140.4 575.7 L1138.8 575.5 L1137.2 575.4 L1135.4 575.3 L1133.7 575.2 L1131.9 575.1 L1130.0 575.0 L1128.1 575.0 L1126.2 575.0 L1124.3 575.0 L1122.4 575.0 L1120.4 575.1 L1118.5 575.2 L1116.5 575.3 L1114.5 575.4 L1112.5 575.5 L1110.6 575.7 L1108.6 575.9 L1106.6 576.1 L1104.6 576.4 L1102.6 576.7 L1100.5 577.0 L1098.4 577.4 L1096.3 577.8 L1094.1 578.3 L1091.9 578.8 L1089.7 579.4 L1087.3 580.1 L1084.9 580.8 L1082.5 581.5 L1080.0 582.3 L1077.5 583.2 L1075.0 584.1 L1072.6 585.0 L1070.1 586.0 L1067.5 587.0 L1065.0 588.1 L1062.6 589.3 L1060.2 590.4 L1057.9 591.6 L1055.6 592.9 L1053.4 594.1 L1051.2 595.5 L1049.0 596.8 L1047.0 598.2 L1045.0 599.6 L1043.0 601.0 L1041.2 602.5 L1039.3 603.9 L1037.6 605.4 L1035.9 607.0 L1034.2 608.5 L1032.6 610.0 L1031.1 611.6 L1029.7 613.2 L1028.2 614.8 L1026.8 616.4 L1025.5 618.1 L1024.2 619.7 L1023.0 621.4 L1021.8 623.1 L1020.6 624.9 L1019.5 626.7 L1018.4 628.5 L1017.3 630.4 L1016.3 632.3 L1015.2 634.3 L1014.2 636.3 L1013.3 638.3 L1012.3 640.4 L1011.4 642.5 L1010.5 644.6 L1009.6 646.8 L1008.8 649.0 L1008.0 651.2 L1007.2 653.4 L1006.5 655.6 L1005.8 657.8 L1005.1 660.1 L1004.5 662.3 L1003.8 664.6 L1003.3 666.9 L1002.7 669.1 L1002.3 671.4 L1001.8 673.6 L1001.3 675.9 L1000.9 678.2 L1000.5 680.6 L1000.2 682.9 L999.8 685.2 L999.5 687.6 L999.2 690.0 L999.0 692.4 L998.7 694.8 L998.5 697.3 L998.2 699.8 L998.0 702.2 L997.8 704.7 L997.6 707.2 Z" fill="url(#gPrev)"/>
<g clip-path="url(#cpPrev)"><path d="M799.9 508.4 L1093.5 390.7 L1195.4 628.4 L1195.4 628.4 L1195.4 627.5 L1195.4 626.5 L1195.4 625.6 L1195.4 624.7 L1195.4 623.7 L1195.4 622.7 L1195.3 621.7 L1195.3 620.7 L1195.2 619.7 L1195.1 618.6 L1195.0 617.5 L1194.8 616.5 L1194.6 615.4 L1194.3 614.3 L1194.1 613.1 L1193.8 612.0 L1193.4 610.9 L1193.0 609.8 L1192.6 608.6 L1192.1 607.5 L1191.6 606.4 L1191.0 605.3 L1190.4 604.2 L1189.8 603.1 L1189.1 602.0 L1188.3 600.9 L1187.5 599.8 L1186.7 598.8 L1185.8 597.7 L1184.9 596.7 L1183.9 595.7 L1182.9 594.7 L1181.9 593.7 L1180.8 592.7 L1179.6 591.7 L1178.5 590.8 L1177.3 589.9 L1176.1 589.0 L1174.9 588.2 L1173.6 587.3 L1172.3 586.5 L1171.0 585.7 L1169.7 585.0 L1168.4 584.3 L1167.0 583.6 L1165.7 582.9 L1164.3 582.3 L1163.0 581.7 L1161.7 581.1 L1160.3 580.6 L1159.0 580.0 L1157.6 579.6 L1156.3 579.1 L1154.9 578.7 L1153.5 578.2 L1152.2 577.9 L1150.8 577.5 L1149.4 577.2 L1148.0 576.9 L1146.5 576.6 L1145.1 576.3 L1143.5 576.1 L1142.0 575.9 L1140.4 575.7 L1138.8 575.5 L1137.2 575.4 L1135.4 575.3 L1133.7 575.2 L1131.9 575.1 L1130.0 575.0 L1128.1 575.0 L1126.2 575.0 L1124.3 575.0 L1122.4 575.0 L1120.4 575.1 L1118.5 575.2 L1116.5 575.3 L1114.5 575.4 L1112.5 575.5 L1110.6 575.7 L1108.6 575.9 L1106.6 576.1 L1104.6 576.4 L1102.6 576.7 L1100.5 577.0 L1098.4 577.4 L1096.3 577.8 L1094.1 578.3 L1091.9 578.8 L1089.7 579.4 L1087.3 580.1 L1084.9 580.8 L1082.5 581.5 L1080.0 582.3 L1077.5 583.2 L1075.0 584.1 L1072.6 585.0 L1070.1 586.0 L1067.5 587.0 L1065.0 588.1 L1062.6 589.3 L1060.2 590.4 L1057.9 591.6 L1055.6 592.9 L1053.4 594.1 L1051.2 595.5 L1049.0 596.8 L1047.0 598.2 L1045.0 599.6 L1043.0 601.0 L1041.2 602.5 L1039.3 603.9 L1037.6 605.4 L1035.9 607.0 L1034.2 608.5 L1032.6 610.0 L1031.1 611.6 L1029.7 613.2 L1028.2 614.8 L1026.8 616.4 L1025.5 618.1 L1024.2 619.7 L1023.0 621.4 L1021.8 623.1 L1020.6 624.9 L1019.5 626.7 L1018.4 628.5 L1017.3 630.4 L1016.3 632.3 L1015.2 634.3 L1014.2 636.3 L1013.3 638.3 L1012.3 640.4 L1011.4 642.5 L1010.5 644.6 L1009.6 646.8 L1008.8 649.0 L1008.0 651.2 L1007.2 653.4 L1006.5 655.6 L1005.8 657.8 L1005.1 660.1 L1004.5 662.3 L1003.8 664.6 L1003.3 666.9 L1002.7 669.1 L1002.3 671.4 L1001.8 673.6 L1001.3 675.9 L1000.9 678.2 L1000.5 680.6 L1000.2 682.9 L999.8 685.2 L999.5 687.6 L999.2 690.0 L999.0 692.4 L998.7 694.8 L998.5 697.3 L998.2 699.8 L998.0 702.2 L997.8 704.7 L997.6 707.2 Z" fill="url(#gPrevR)"/><path d="M799.9 508.4 L1093.5 390.7 L1195.4 628.4 L1195.4 628.4 L1195.4 627.5 L1195.4 626.5 L1195.4 625.6 L1195.4 624.7 L1195.4 623.7 L1195.4 622.7 L1195.3 621.7 L1195.3 620.7 L1195.2 619.7 L1195.1 618.6 L1195.0 617.5 L1194.8 616.5 L1194.6 615.4 L1194.3 614.3 L1194.1 613.1 L1193.8 612.0 L1193.4 610.9 L1193.0 609.8 L1192.6 608.6 L1192.1 607.5 L1191.6 606.4 L1191.0 605.3 L1190.4 604.2 L1189.8 603.1 L1189.1 602.0 L1188.3 600.9 L1187.5 599.8 L1186.7 598.8 L1185.8 597.7 L1184.9 596.7 L1183.9 595.7 L1182.9 594.7 L1181.9 593.7 L1180.8 592.7 L1179.6 591.7 L1178.5 590.8 L1177.3 589.9 L1176.1 589.0 L1174.9 588.2 L1173.6 587.3 L1172.3 586.5 L1171.0 585.7 L1169.7 585.0 L1168.4 584.3 L1167.0 583.6 L1165.7 582.9 L1164.3 582.3 L1163.0 581.7 L1161.7 581.1 L1160.3 580.6 L1159.0 580.0 L1157.6 579.6 L1156.3 579.1 L1154.9 578.7 L1153.5 578.2 L1152.2 577.9 L1150.8 577.5 L1149.4 577.2 L1148.0 576.9 L1146.5 576.6 L1145.1 576.3 L1143.5 576.1 L1142.0 575.9 L1140.4 575.7 L1138.8 575.5 L1137.2 575.4 L1135.4 575.3 L1133.7 575.2 L1131.9 575.1 L1130.0 575.0 L1128.1 575.0 L1126.2 575.0 L1124.3 575.0 L1122.4 575.0 L1120.4 575.1 L1118.5 575.2 L1116.5 575.3 L1114.5 575.4 L1112.5 575.5 L1110.6 575.7 L1108.6 575.9 L1106.6 576.1 L1104.6 576.4 L1102.6 576.7 L1100.5 577.0 L1098.4 577.4 L1096.3 577.8 L1094.1 578.3 L1091.9 578.8 L1089.7 579.4 L1087.3 580.1 L1084.9 580.8 L1082.5 581.5 L1080.0 582.3 L1077.5 583.2 L1075.0 584.1 L1072.6 585.0 L1070.1 586.0 L1067.5 587.0 L1065.0 588.1 L1062.6 589.3 L1060.2 590.4 L1057.9 591.6 L1055.6 592.9 L1053.4 594.1 L1051.2 595.5 L1049.0 596.8 L1047.0 598.2 L1045.0 599.6 L1043.0 601.0 L1041.2 602.5 L1039.3 603.9 L1037.6 605.4 L1035.9 607.0 L1034.2 608.5 L1032.6 610.0 L1031.1 611.6 L1029.7 613.2 L1028.2 614.8 L1026.8 616.4 L1025.5 618.1 L1024.2 619.7 L1023.0 621.4 L1021.8 623.1 L1020.6 624.9 L1019.5 626.7 L1018.4 628.5 L1017.3 630.4 L1016.3 632.3 L1015.2 634.3 L1014.2 636.3 L1013.3 638.3 L1012.3 640.4 L1011.4 642.5 L1010.5 644.6 L1009.6 646.8 L1008.8 649.0 L1008.0 651.2 L1007.2 653.4 L1006.5 655.6 L1005.8 657.8 L1005.1 660.1 L1004.5 662.3 L1003.8 664.6 L1003.3 666.9 L1002.7 669.1 L1002.3 671.4 L1001.8 673.6 L1001.3 675.9 L1000.9 678.2 L1000.5 680.6 L1000.2 682.9 L999.8 685.2 L999.5 687.6 L999.2 690.0 L999.0 692.4 L998.7 694.8 L998.5 697.3 L998.2 699.8 L998.0 702.2 L997.8 704.7 L997.6 707.2 Z" fill="url(#gPrevL)"/><ellipse cx="0" cy="0" rx="84" ry="40" transform="translate(886 546) rotate(14)" fill="url(#gHi)"/></g>
<path d="M893.9 690.0 L894.0 685.6 L893.9 681.1 L893.7 676.4 L893.3 671.8 L892.8 667.0 L892.2 662.2 L891.5 657.3 L890.6 652.3 L889.6 647.4 L888.4 642.3 L887.1 637.3 L885.6 632.2 L884.1 627.1 L882.3 622.0 L880.5 616.9 L878.5 611.8 L876.4 606.7 L874.2 601.7 L871.8 596.6 L869.3 591.6 L866.7 586.6 L864.0 581.7 L861.2 576.9 L858.3 572.1 L855.2 567.3 L852.1 562.7 L848.8 558.1 L845.5 553.6 L842.1 549.2 L838.6 544.9 L835.0 540.7 L831.3 536.6 L827.6 532.6 L823.8 528.7 L819.9 525.0 L816.0 521.4 L812.0 517.9 L808.0 514.6 L804.0 511.4 L799.9 508.4" fill="none" stroke="#1b86c9" stroke-width="1.1"/>
<path d="M799.9 508.4 L997.6 707.2" stroke="#ff70b4" stroke-width="0.9" fill="none"/>
<path d="M1172.3 586.5 L1604.8 855.6 L1605.4 856.0 L1606.0 856.4 L1606.6 856.8 L1607.2 857.2 L1607.8 857.6 L1608.3 858.1 L1608.9 858.5 L1609.4 859.0 L1610.0 859.5 L1610.5 860.0 L1611.0 860.5 L1611.5 861.0 L1612.0 861.5 L1612.5 862.0 L1613.0 862.5 L1613.5 863.1 L1613.9 863.7 L1614.4 864.2 L1614.8 864.8 L1615.3 865.4 L1615.7 866.0 L1616.1 866.6 L1616.5 867.2 L1616.9 867.9 L1617.3 868.5 L1617.7 869.2 L1618.1 869.8 L1618.5 870.5 L1618.8 871.2 L1619.2 871.9 L1619.5 872.6 L1619.8 873.3 L1620.1 874.0 L1620.4 874.7 L1620.7 875.4 L1621.0 876.2 L1621.3 876.9 L1621.5 877.7 L1621.8 878.5 L1622.0 879.3 L1622.3 880.0 L1622.5 880.8 L1622.7 881.7 L1622.9 882.5 L1623.1 883.3 L1623.3 884.1 L1623.5 885.0 L1623.6 885.8 L1623.8 886.6 L1623.9 887.5 L1624.1 888.4 L1624.2 889.3 L1624.3 890.1 L1624.4 891.0 L1624.5 891.9 L1624.6 892.8 L1624.7 893.7 L1624.7 894.6 L1624.8 895.6 L1624.8 896.5 L1195.4 628.4 L1195.4 628.4 L1195.4 627.5 L1195.4 626.5 L1195.4 625.6 L1195.4 624.7 L1195.4 623.7 L1195.4 622.7 L1195.3 621.7 L1195.3 620.7 L1195.2 619.7 L1195.1 618.6 L1195.0 617.5 L1194.8 616.5 L1194.6 615.4 L1194.3 614.3 L1194.1 613.1 L1193.8 612.0 L1193.4 610.9 L1193.0 609.8 L1192.6 608.6 L1192.1 607.5 L1191.6 606.4 L1191.0 605.3 L1190.4 604.2 L1189.8 603.1 L1189.1 602.0 L1188.3 600.9 L1187.5 599.8 L1186.7 598.8 L1185.8 597.7 L1184.9 596.7 L1183.9 595.7 L1182.9 594.7 L1181.9 593.7 L1180.8 592.7 L1179.6 591.7 L1178.5 590.8 L1177.3 589.9 L1176.1 589.0 L1174.9 588.2 L1173.6 587.3 L1172.3 586.5 Z" fill="url(#gBrIn)"/>
<path d="M1604.8 855.6 L1605.4 856.0 L1606.0 856.4 L1606.6 856.8 L1607.2 857.2 L1607.8 857.6 L1608.3 858.1 L1608.9 858.5 L1609.4 859.0 L1610.0 859.5 L1610.5 860.0 L1611.0 860.5 L1611.5 861.0 L1612.0 861.5 L1612.5 862.0 L1613.0 862.5 L1613.5 863.1 L1613.9 863.7 L1614.4 864.2 L1614.8 864.8 L1615.3 865.4 L1615.7 866.0 L1616.1 866.6 L1616.5 867.2 L1616.9 867.9 L1617.3 868.5 L1617.7 869.2 L1618.1 869.8 L1618.5 870.5 L1618.8 871.2 L1619.2 871.9 L1619.5 872.6 L1619.8 873.3 L1620.1 874.0 L1620.4 874.7 L1620.7 875.4 L1621.0 876.2 L1621.3 876.9 L1621.5 877.7 L1621.8 878.5 L1622.0 879.3 L1622.3 880.0 L1622.5 880.8 L1622.7 881.7 L1622.9 882.5 L1623.1 883.3 L1623.3 884.1 L1623.5 885.0 L1623.6 885.8 L1623.8 886.6 L1623.9 887.5 L1624.1 888.4 L1624.2 889.3 L1624.3 890.1 L1624.4 891.0 L1624.5 891.9 L1624.6 892.8 L1624.7 893.7 L1624.7 894.6 L1624.8 895.6 L1624.8 896.5 L1195.4 628.4" fill="none" stroke="#1b86c9" stroke-width="1.1"/>
<path d="M997.6 707.2 L997.8 704.7 L998.0 702.2 L998.2 699.8 L998.5 697.3 L998.7 694.8 L999.0 692.4 L999.2 690.0 L999.5 687.6 L999.8 685.2 L1000.2 682.9 L1000.5 680.6 L1000.9 678.2 L1001.3 675.9 L1001.8 673.6 L1002.3 671.4 L1002.7 669.1 L1003.3 666.9 L1003.8 664.6 L1004.5 662.3 L1005.1 660.1 L1005.8 657.8 L1006.5 655.6 L1007.2 653.4 L1008.0 651.2 L1008.8 649.0 L1009.6 646.8 L1010.5 644.6 L1011.4 642.5 L1012.3 640.4 L1013.3 638.3 L1014.2 636.3 L1015.2 634.3 L1016.3 632.3 L1017.3 630.4 L1018.4 628.5 L1019.5 626.7 L1020.6 624.9 L1021.8 623.1 L1023.0 621.4 L1024.2 619.7 L1025.5 618.1 L1026.8 616.4 L1028.2 614.8 L1029.7 613.2 L1031.1 611.6 L1032.6 610.0 L1034.2 608.5 L1035.9 607.0 L1037.6 605.4 L1039.3 603.9 L1041.2 602.5 L1043.0 601.0 L1045.0 599.6 L1047.0 598.2 L1049.0 596.8 L1051.2 595.5 L1053.4 594.1 L1055.6 592.9 L1057.9 591.6 L1060.2 590.4 L1062.6 589.3 L1065.0 588.1 L1067.5 587.0 L1070.1 586.0 L1072.6 585.0 L1075.0 584.1 L1077.5 583.2 L1080.0 582.3 L1082.5 581.5 L1084.9 580.8 L1087.3 580.1 L1089.7 579.4 L1091.9 578.8 L1094.1 578.3 L1096.3 577.8 L1098.4 577.4 L1100.5 577.0 L1102.6 576.7 L1104.6 576.4 L1106.6 576.1 L1108.6 575.9 L1110.6 575.7 L1112.5 575.5 L1114.5 575.4 L1116.5 575.3 L1118.5 575.2 L1120.4 575.1 L1122.4 575.0 L1124.3 575.0 L1126.2 575.0 L1128.1 575.0 L1130.0 575.0 L1131.9 575.1 L1133.7 575.2 L1135.4 575.3 L1137.2 575.4 L1138.8 575.5 L1140.4 575.7 L1142.0 575.9 L1143.5 576.1 L1145.1 576.3 L1146.5 576.6 L1148.0 576.9 L1149.4 577.2 L1150.8 577.5 L1152.2 577.9 L1153.5 578.2 L1154.9 578.7 L1156.3 579.1 L1157.6 579.6 L1159.0 580.0 L1160.3 580.6 L1161.7 581.1 L1163.0 581.7 L1164.3 582.3 L1165.7 582.9 L1167.0 583.6 L1168.4 584.3 L1169.7 585.0 L1171.0 585.7 L1172.3 586.5 L1604.8 855.6 L1602.6 854.3 L1600.2 853.2 L1597.7 852.2 L1595.2 851.3 L1592.5 850.7 L1589.8 850.2 L1587.0 849.8 L1584.1 849.6 L1581.1 849.6 L1578.1 849.7 L1575.0 850.0 L1571.9 850.5 L1568.7 851.1 L1565.5 851.9 L1562.2 852.9 L1558.9 854.0 L1555.6 855.2 L1552.2 856.6 L1548.9 858.2 L1545.5 859.9 L1542.1 861.8 L1538.7 863.8 L1535.3 865.9 L1532.0 868.2 L1528.6 870.6 L1525.3 873.1 L1522.0 875.8 L1518.7 878.5 L1515.5 881.4 L1512.3 884.4 L1509.2 887.5 L1506.1 890.7 L1503.1 894.0 L1500.2 897.4 L1497.3 900.9 L1494.5 904.4 L1491.8 908.0 L1489.2 911.7 L1486.6 915.4 L1484.2 919.2 L1481.8 923.0 L1479.6 926.9 L1477.5 930.8 L1475.4 934.8 L1473.5 938.7 L1471.7 942.7 L1470.0 946.6 L1468.5 950.6 L1467.1 954.5 L1465.8 958.5 L1464.6 962.4 L1463.5 966.3 L1462.6 970.2 L1461.9 974.0 L1461.2 977.8 L1460.7 981.5 L1460.4 985.1 L1460.1 988.7 L1460.0 992.3 L1460.1 995.7 Z" fill="url(#gBr)"/>
<path d="M1604.8 855.6 L1602.6 854.3 L1600.2 853.2 L1597.7 852.2 L1595.2 851.3 L1592.5 850.7 L1589.8 850.2 L1587.0 849.8 L1584.1 849.6 L1581.1 849.6 L1578.1 849.7 L1575.0 850.0 L1571.9 850.5 L1568.7 851.1 L1565.5 851.9 L1562.2 852.9 L1558.9 854.0 L1555.6 855.2 L1552.2 856.6 L1548.9 858.2 L1545.5 859.9 L1542.1 861.8 L1538.7 863.8 L1535.3 865.9 L1532.0 868.2 L1528.6 870.6 L1525.3 873.1 L1522.0 875.8 L1518.7 878.5 L1515.5 881.4 L1512.3 884.4 L1509.2 887.5 L1506.1 890.7 L1503.1 894.0 L1500.2 897.4 L1497.3 900.9 L1494.5 904.4 L1491.8 908.0 L1489.2 911.7 L1486.6 915.4 L1484.2 919.2 L1481.8 923.0 L1479.6 926.9 L1477.5 930.8 L1475.4 934.8 L1473.5 938.7 L1471.7 942.7 L1470.0 946.6 L1468.5 950.6 L1467.1 954.5 L1465.8 958.5 L1464.6 962.4 L1463.5 966.3 L1462.6 970.2 L1461.9 974.0 L1461.2 977.8 L1460.7 981.5 L1460.4 985.1 L1460.1 988.7 L1460.0 992.3 L1460.1 995.7 L997.6 707.2" fill="none" stroke="#1b86c9" stroke-width="1.1"/>
<path d="M1172.3 586.5 L1604.8 855.6" fill="none" stroke="#111" stroke-width="1.4"/>
<path d="M1093.5 390.7 Q1149.5 511.5 1193.4 623.4" stroke="#ff70b4" stroke-width="0.9" fill="none"/>
<path d="M997.6 707.2 L997.8 704.7 L998.0 702.2 L998.2 699.8 L998.5 697.3 L998.7 694.8 L999.0 692.4 L999.2 690.0 L999.5 687.6 L999.8 685.2 L1000.2 682.9 L1000.5 680.6 L1000.9 678.2 L1001.3 675.9 L1001.8 673.6 L1002.3 671.4 L1002.7 669.1 L1003.3 666.9 L1003.8 664.6 L1004.5 662.3 L1005.1 660.1 L1005.8 657.8 L1006.5 655.6 L1007.2 653.4 L1008.0 651.2 L1008.8 649.0 L1009.6 646.8 L1010.5 644.6 L1011.4 642.5 L1012.3 640.4 L1013.3 638.3 L1014.2 636.3 L1015.2 634.3 L1016.3 632.3 L1017.3 630.4 L1018.4 628.5 L1019.5 626.7 L1020.6 624.9 L1021.8 623.1 L1023.0 621.4 L1024.2 619.7 L1025.5 618.1 L1026.8 616.4 L1028.2 614.8 L1029.7 613.2 L1031.1 611.6 L1032.6 610.0 L1034.2 608.5 L1035.9 607.0 L1037.6 605.4 L1039.3 603.9 L1041.2 602.5 L1043.0 601.0 L1045.0 599.6 L1047.0 598.2 L1049.0 596.8 L1051.2 595.5 L1053.4 594.1 L1055.6 592.9 L1057.9 591.6 L1060.2 590.4 L1062.6 589.3 L1065.0 588.1 L1067.5 587.0 L1070.1 586.0 L1072.6 585.0 L1075.0 584.1 L1077.5 583.2 L1080.0 582.3 L1082.5 581.5 L1084.9 580.8 L1087.3 580.1 L1089.7 579.4 L1091.9 578.8 L1094.1 578.3 L1096.3 577.8 L1098.4 577.4 L1100.5 577.0 L1102.6 576.7 L1104.6 576.4 L1106.6 576.1 L1108.6 575.9 L1110.6 575.7 L1112.5 575.5 L1114.5 575.4 L1116.5 575.3 L1118.5 575.2 L1120.4 575.1 L1122.4 575.0 L1124.3 575.0 L1126.2 575.0 L1128.1 575.0 L1130.0 575.0 L1131.9 575.1 L1133.7 575.2 L1135.4 575.3 L1137.2 575.4 L1138.8 575.5 L1140.4 575.7 L1142.0 575.9 L1143.5 576.1 L1145.1 576.3 L1146.5 576.6 L1148.0 576.9 L1149.4 577.2 L1150.8 577.5 L1152.2 577.9 L1153.5 578.2 L1154.9 578.7 L1156.3 579.1 L1157.6 579.6 L1159.0 580.0 L1160.3 580.6 L1161.7 581.1 L1163.0 581.7 L1164.3 582.3 L1165.7 582.9 L1167.0 583.6 L1168.4 584.3 L1169.7 585.0 L1171.0 585.7 L1172.3 586.5 L1173.6 587.3 L1174.9 588.2 L1176.1 589.0 L1177.3 589.9 L1178.5 590.8 L1179.6 591.7 L1180.8 592.7 L1181.9 593.7 L1182.9 594.7 L1183.9 595.7 L1184.9 596.7 L1185.8 597.7 L1186.7 598.8 L1187.5 599.8 L1188.3 600.9 L1189.1 602.0 L1189.8 603.1 L1190.4 604.2 L1191.0 605.3 L1191.6 606.4 L1192.1 607.5 L1192.6 608.6 L1193.0 609.8 L1193.4 610.9 L1193.8 612.0 L1194.1 613.1 L1194.3 614.3 L1194.6 615.4 L1194.8 616.5 L1195.0 617.5 L1195.1 618.6 L1195.2 619.7 L1195.3 620.7 L1195.3 621.7 L1195.4 622.7 L1195.4 623.7 L1195.4 624.7 L1195.4 625.6 L1195.4 626.5 L1195.4 627.5 L1195.4 628.4" fill="none" stroke="#2f7fcf" stroke-width="5.6" stroke-linecap="butt"/>
<path d="M997.6 707.2 L997.8 704.7 L998.0 702.2 L998.2 699.8 L998.5 697.3 L998.7 694.8 L999.0 692.4 L999.2 690.0 L999.5 687.6 L999.8 685.2 L1000.2 682.9 L1000.5 680.6 L1000.9 678.2 L1001.3 675.9 L1001.8 673.6 L1002.3 671.4 L1002.7 669.1 L1003.3 666.9 L1003.8 664.6 L1004.5 662.3 L1005.1 660.1 L1005.8 657.8 L1006.5 655.6 L1007.2 653.4 L1008.0 651.2 L1008.8 649.0 L1009.6 646.8 L1010.5 644.6 L1011.4 642.5 L1012.3 640.4 L1013.3 638.3 L1014.2 636.3 L1015.2 634.3 L1016.3 632.3 L1017.3 630.4 L1018.4 628.5 L1019.5 626.7 L1020.6 624.9 L1021.8 623.1 L1023.0 621.4 L1024.2 619.7 L1025.5 618.1 L1026.8 616.4 L1028.2 614.8 L1029.7 613.2 L1031.1 611.6 L1032.6 610.0 L1034.2 608.5 L1035.9 607.0 L1037.6 605.4 L1039.3 603.9 L1041.2 602.5 L1043.0 601.0 L1045.0 599.6 L1047.0 598.2 L1049.0 596.8 L1051.2 595.5 L1053.4 594.1 L1055.6 592.9 L1057.9 591.6 L1060.2 590.4 L1062.6 589.3 L1065.0 588.1 L1067.5 587.0 L1070.1 586.0 L1072.6 585.0 L1075.0 584.1 L1077.5 583.2 L1080.0 582.3 L1082.5 581.5 L1084.9 580.8 L1087.3 580.1 L1089.7 579.4 L1091.9 578.8 L1094.1 578.3 L1096.3 577.8 L1098.4 577.4 L1100.5 577.0 L1102.6 576.7 L1104.6 576.4 L1106.6 576.1 L1108.6 575.9 L1110.6 575.7 L1112.5 575.5 L1114.5 575.4 L1116.5 575.3 L1118.5 575.2 L1120.4 575.1 L1122.4 575.0 L1124.3 575.0 L1126.2 575.0 L1128.1 575.0 L1130.0 575.0 L1131.9 575.1 L1133.7 575.2 L1135.4 575.3 L1137.2 575.4 L1138.8 575.5 L1140.4 575.7 L1142.0 575.9 L1143.5 576.1 L1145.1 576.3 L1146.5 576.6 L1148.0 576.9 L1149.4 577.2 L1150.8 577.5 L1152.2 577.9 L1153.5 578.2 L1154.9 578.7 L1156.3 579.1 L1157.6 579.6 L1159.0 580.0 L1160.3 580.6 L1161.7 581.1 L1163.0 581.7 L1164.3 582.3 L1165.7 582.9 L1167.0 583.6 L1168.4 584.3 L1169.7 585.0 L1171.0 585.7 L1172.3 586.5 L1173.6 587.3 L1174.9 588.2 L1176.1 589.0 L1177.3 589.9 L1178.5 590.8 L1179.6 591.7 L1180.8 592.7 L1181.9 593.7 L1182.9 594.7 L1183.9 595.7 L1184.9 596.7 L1185.8 597.7 L1186.7 598.8 L1187.5 599.8 L1188.3 600.9 L1189.1 602.0 L1189.8 603.1 L1190.4 604.2 L1191.0 605.3 L1191.6 606.4 L1192.1 607.5 L1192.6 608.6 L1193.0 609.8 L1193.4 610.9 L1193.8 612.0 L1194.1 613.1 L1194.3 614.3 L1194.6 615.4 L1194.8 616.5 L1195.0 617.5 L1195.1 618.6 L1195.2 619.7 L1195.3 620.7 L1195.3 621.7 L1195.4 622.7 L1195.4 623.7 L1195.4 624.7 L1195.4 625.6 L1195.4 626.5 L1195.4 627.5 L1195.4 628.4" fill="none" stroke="#55a8fb" stroke-width="3.6"/>
<path d="M997.6 707.2 L997.8 704.7 L998.0 702.2 L998.2 699.8 L998.5 697.3 L998.7 694.8 L999.0 692.4 L999.2 690.0 L999.5 687.6 L999.8 685.2 L1000.2 682.9 L1000.5 680.6 L1000.9 678.2 L1001.3 675.9 L1001.8 673.6 L1002.3 671.4 L1002.7 669.1 L1003.3 666.9 L1003.8 664.6 L1004.5 662.3 L1005.1 660.1 L1005.8 657.8 L1006.5 655.6 L1007.2 653.4 L1008.0 651.2 L1008.8 649.0 L1009.6 646.8 L1010.5 644.6 L1011.4 642.5 L1012.3 640.4 L1013.3 638.3 L1014.2 636.3 L1015.2 634.3 L1016.3 632.3 L1017.3 630.4 L1018.4 628.5 L1019.5 626.7 L1020.6 624.9 L1021.8 623.1 L1023.0 621.4 L1024.2 619.7 L1025.5 618.1 L1026.8 616.4 L1028.2 614.8 L1029.7 613.2 L1031.1 611.6 L1032.6 610.0 L1034.2 608.5 L1035.9 607.0 L1037.6 605.4 L1039.3 603.9 L1041.2 602.5 L1043.0 601.0 L1045.0 599.6 L1047.0 598.2 L1049.0 596.8 L1051.2 595.5 L1053.4 594.1 L1055.6 592.9 L1057.9 591.6 L1060.2 590.4 L1062.6 589.3 L1065.0 588.1 L1067.5 587.0 L1070.1 586.0 L1072.6 585.0 L1075.0 584.1 L1077.5 583.2 L1080.0 582.3 L1082.5 581.5 L1084.9 580.8 L1087.3 580.1 L1089.7 579.4 L1091.9 578.8 L1094.1 578.3 L1096.3 577.8 L1098.4 577.4 L1100.5 577.0 L1102.6 576.7 L1104.6 576.4 L1106.6 576.1 L1108.6 575.9 L1110.6 575.7 L1112.5 575.5 L1114.5 575.4 L1116.5 575.3 L1118.5 575.2 L1120.4 575.1 L1122.4 575.0 L1124.3 575.0 L1126.2 575.0 L1128.1 575.0 L1130.0 575.0 L1131.9 575.1 L1133.7 575.2 L1135.4 575.3 L1137.2 575.4 L1138.8 575.5 L1140.4 575.7 L1142.0 575.9 L1143.5 576.1 L1145.1 576.3 L1146.5 576.6 L1148.0 576.9 L1149.4 577.2 L1150.8 577.5 L1152.2 577.9 L1153.5 578.2 L1154.9 578.7 L1156.3 579.1 L1157.6 579.6 L1159.0 580.0 L1160.3 580.6 L1161.7 581.1 L1163.0 581.7 L1164.3 582.3 L1165.7 582.9 L1167.0 583.6 L1168.4 584.3 L1169.7 585.0 L1171.0 585.7 L1172.3 586.5 L1173.6 587.3 L1174.9 588.2 L1176.1 589.0 L1177.3 589.9 L1178.5 590.8 L1179.6 591.7 L1180.8 592.7 L1181.9 593.7 L1182.9 594.7 L1183.9 595.7 L1184.9 596.7 L1185.8 597.7 L1186.7 598.8 L1187.5 599.8 L1188.3 600.9 L1189.1 602.0 L1189.8 603.1 L1190.4 604.2 L1191.0 605.3 L1191.6 606.4 L1192.1 607.5 L1192.6 608.6 L1193.0 609.8 L1193.4 610.9 L1193.8 612.0 L1194.1 613.1 L1194.3 614.3 L1194.6 615.4 L1194.8 616.5 L1195.0 617.5 L1195.1 618.6 L1195.2 619.7 L1195.3 620.7 L1195.3 621.7 L1195.4 622.7 L1195.4 623.7 L1195.4 624.7 L1195.4 625.6 L1195.4 626.5 L1195.4 627.5 L1195.4 628.4" fill="none" stroke="#1f5fe8" stroke-width="0.9" stroke-dasharray="5 3"/>
<path d="M799.9 508.4 L1093.5 390.7" fill="none" stroke="#4aa2ff" stroke-width="2.6"/>
<path d="M799.9 508.4 L1093.5 390.7" fill="none" stroke="#0a3fe0" stroke-width="1" stroke-dasharray="5 2"/>
<g transform="translate(869 480.6) rotate(0)" fill="#ff1a1a" stroke="#ff1a1a" stroke-width="0.6"><path d="M-3.2 -3.6 L0 0 L-3.2 3.6z M3.2 -3.6 L0 0 L3.2 3.6z"/><path d="M-3.2 -4.2V4.2 M3.2 -4.2 V4.2" fill="none" stroke-width="0.8"/></g>
<g transform="translate(988.4 434.3) rotate(0)" fill="#ff1a1a" stroke="#ff1a1a" stroke-width="0.6"><path d="M-3.2 -3.6 L0 0 L-3.2 3.6z M3.2 -3.6 L0 0 L3.2 3.6z"/><path d="M-3.2 -4.2V4.2 M3.2 -4.2 V4.2" fill="none" stroke-width="0.8"/></g>
<path d="M1022.8 614.5 l4.5 1.2 l0.8 5.8 l-2.6 -3.2z" fill="#ff1a1a"/><path d="M1145.8 572 v8.5 M1143.2 573.5 l2.6 2.6 l-2.6 2.6" stroke="#ff1a1a" stroke-width="1.3" fill="none"/>
<path d="M946.5 260 V446" stroke="#333" stroke-width="1.1"/><rect x="943.0" y="445.5" width="7" height="7" fill="#f4f4f4" stroke="#222" stroke-width="1"/><rect x="944.5" y="233.5" width="77" height="27" fill="#fff" stroke="#fff" stroke-width="1"/><rect x="945.5" y="234.5" width="75" height="25" fill="#fff" stroke="#000" stroke-width="1.2"/><rect x="946" y="235" width="11.5" height="24" fill="#52a6ff"/><path d="M957.7 234.5 v25" stroke="#000" stroke-width="1.1"/><rect x="960.5" y="238.5" width="55" height="17" fill="#fff" stroke="#e6e6e6" stroke-width="2"/><text x="964.3" y="251.2" font-family="Liberation Sans, sans-serif" font-size="11.3" fill="#111" textLength="27.4" lengthAdjust="spacingAndGlyphs">None</text><path d="M1004 246.5 l4 4 l4 -4" fill="none" stroke="#444" stroke-width="1.1"/><circle cx="946.3" cy="246.3" r="3.1" fill="#fff" stroke="#000" stroke-width="1"/><path d="M945.8 246.3 h3.4" stroke="#000" stroke-width="1"/>
<path d="M1092.5 389 V575" stroke="#333" stroke-width="1.1"/><rect x="1089.0" y="574.5" width="7" height="7" fill="#f4f4f4" stroke="#222" stroke-width="1"/><rect x="1090.5" y="363.0" width="77" height="27" fill="#fff" stroke="#fff" stroke-width="1"/><rect x="1091.5" y="364.0" width="75" height="25" fill="#fff" stroke="#000" stroke-width="1.2"/><rect x="1092" y="364.5" width="11.5" height="24" fill="#52a6ff"/><path d="M1103.7 364.0 v25" stroke="#000" stroke-width="1.1"/><rect x="1106.5" y="368.0" width="55" height="17" fill="#fff" stroke="#e6e6e6" stroke-width="2"/><text x="1110.3" y="380.7" font-family="Liberation Sans, sans-serif" font-size="11.3" fill="#111" textLength="27.4" lengthAdjust="spacingAndGlyphs">None</text><path d="M1150 376.0 l4 4 l4 -4" fill="none" stroke="#444" stroke-width="1.1"/><circle cx="1092.3" cy="375.8" r="3.1" fill="#fff" stroke="#000" stroke-width="1"/><path d="M1091.8 375.8 h3.4" stroke="#000" stroke-width="1"/>
<circle cx="799.6" cy="508.3" r="5.3" fill="#12c638" stroke="#0a0a0a" stroke-width="1"/><path d="M799.6 508.3 h5.3" stroke="#0a0a0a" stroke-width="1"/>
<circle cx="997.6" cy="707.3" r="5.3" fill="#12c638" stroke="#0a0a0a" stroke-width="1"/><path d="M997.6 707.3 h5.3" stroke="#0a0a0a" stroke-width="1"/>
<circle cx="1094.0" cy="391.0" r="5.3" fill="#ff84c2" stroke="#0a0a0a" stroke-width="1"/><path d="M1094.0 391.0 h5.3" stroke="#0a0a0a" stroke-width="1"/>
<circle cx="1195.3" cy="628.4" r="5.3" fill="#ff84c2" stroke="#0a0a0a" stroke-width="1"/><path d="M1195.3 628.4 h5.3" stroke="#0a0a0a" stroke-width="1"/>
<g stroke-linecap="butt"><path d="M341 1016 L318.5 1025.4" stroke="#0c0cd0" stroke-width="3.4"/><path d="M314.6 1027 l8.4 -6.8 l2.8 7z" fill="#0c0cd0"/>
<path d="M341 1016 L328 1006" stroke="#0a5212" stroke-width="3.4"/><path d="M322.8 1001 l9.4 1.6 l-5.4 6.6z" fill="#0a5212"/>
<path d="M340.6 1016 L341.4 999" stroke="#a80c0c" stroke-width="3.2"/><path d="M341.7 992.4 l4 8.6 l-8 -0.2z" fill="#a80c0c"/><circle cx="341" cy="1016" r="1.6" fill="#7a1010"/></g>
<text x="338.6" y="989.3" font-family="Liberation Sans, sans-serif" font-size="8.5" fill="#ff5050">x</text>
<text x="316.4" y="997.6" font-family="Liberation Sans, sans-serif" font-size="8" fill="#3f9f4f">Y</text>
<text x="308.6" y="1029" font-family="Liberation Sans, sans-serif" font-size="8" font-weight="bold" fill="#3838ff">Z</text>
</svg>
</body></html>
